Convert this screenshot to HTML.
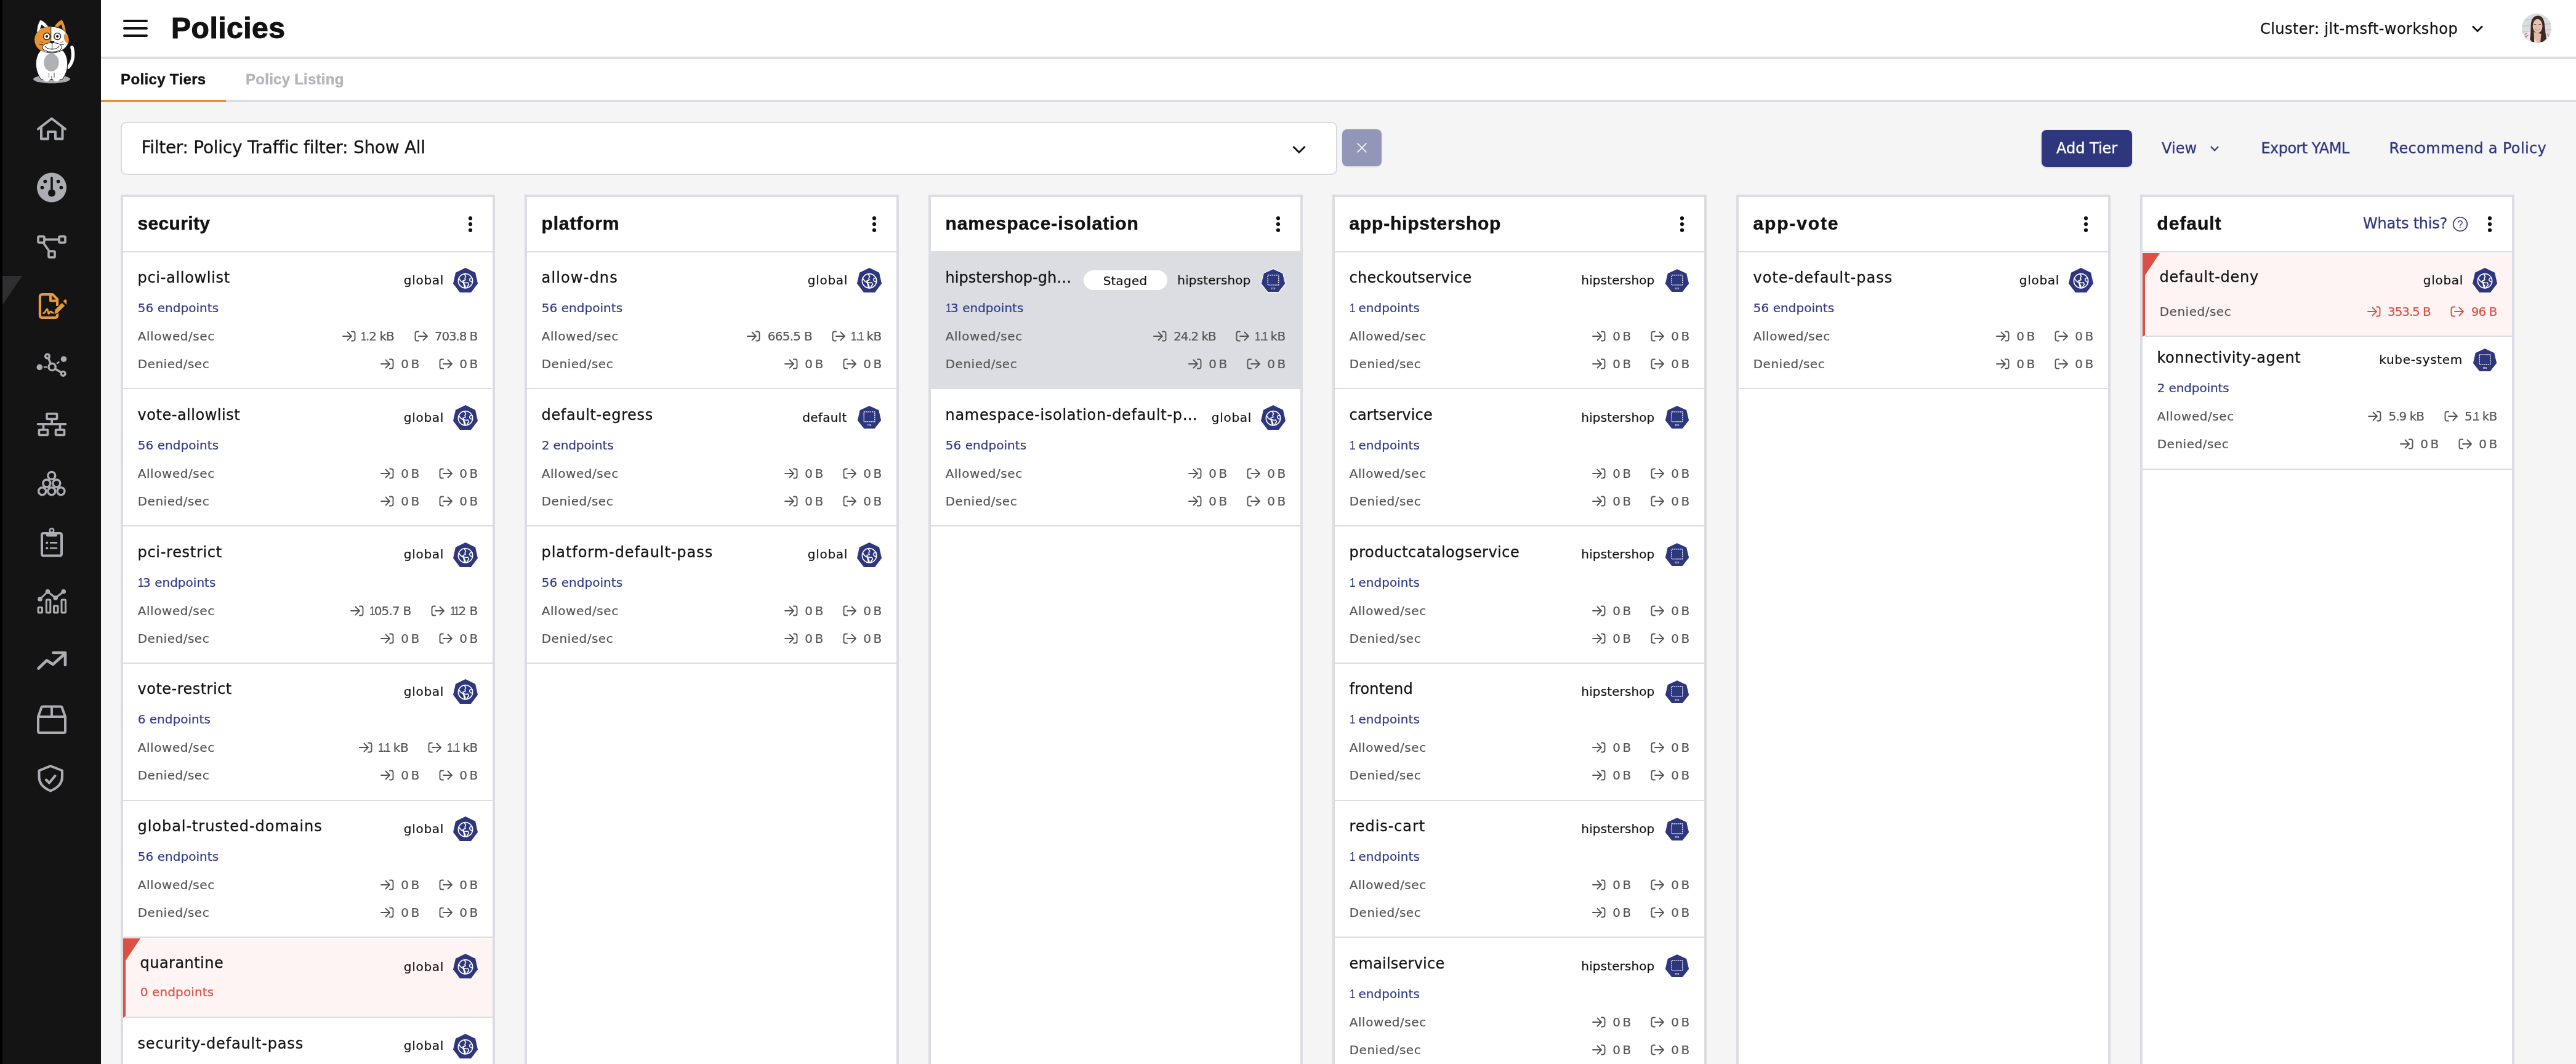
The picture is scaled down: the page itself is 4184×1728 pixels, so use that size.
<!DOCTYPE html><html lang="en"><head><meta charset="utf-8"><title>Policies</title>
<style>
html,body{margin:0;padding:0}
body{width:4184px;height:1728px;overflow:hidden;background:#f5f5f5;position:relative;font-family:"DejaVu Sans", "Liberation Sans", sans-serif}
.a{position:absolute}
.t{position:absolute;white-space:nowrap}
.r{font-family:"DejaVu Sans", "Liberation Sans", sans-serif;font-weight:400}
.b{font-family:"Liberation Sans", "DejaVu Sans", sans-serif;font-weight:700}
.col{position:absolute;top:316px;width:600px;height:1500px;border:4px solid #dcdde2;background:#fff}
.n1{font-family:"Liberation Sans",sans-serif;display:inline-block;transform:scaleX(.85);transform-origin:60% 50%;margin:0 -.08em 0 -.17em}
.sep{position:absolute;height:2px;background:#dcdde2}

</style></head><body><div id="root" style="position:absolute;left:0;top:0;width:4184px;height:1728px;will-change:transform">
<div class="a" style="left:0;top:0;width:164px;height:1728px;background:#141414"></div>
<div class="a" style="left:0;top:0;width:4px;height:1728px;background:#000"></div>
<svg class="a" style="left:4px;top:448px" width="32" height="47" viewBox="0 0 32 47"><polygon points="0,0 32,0 0,47" fill="#2f2f31"/></svg>
<svg class="a" style="left:40px;top:20px" width="100" height="130" viewBox="0 0 100 130">
<ellipse cx="44" cy="108.5" rx="30" ry="6.8" fill="#a9aab0"/>
<path d="M71 89C78 82 80.5 70 77 57" fill="none" stroke="#141414" stroke-width="8" stroke-linecap="round"/>
<path d="M71 89C78 82 80.5 70 77 57" fill="none" stroke="#fff" stroke-width="5.5" stroke-linecap="round"/>
<path d="M26 62C16 72 15 94 27 109H61C73 94 72 72 62 62Z" fill="#fff" stroke="#141414" stroke-width="1"/>
<circle cx="35.5" cy="106.5" r="6" fill="#fff"/><circle cx="51.5" cy="106.5" r="6" fill="#fff"/>
<path d="M39.5 98V106M48 98V106M44 103V110" stroke="#141414" stroke-width=".8" fill="none"/>
<ellipse cx="43.4" cy="81.5" rx="12.2" ry="14.5" fill="#b0b1b7"/>
<path d="M19.5 33C20 24 22 16 25.8 12.3C31 14 36 19 40 25Z" fill="#fff" stroke="#141414" stroke-width="1" stroke-linejoin="round"/>
<path d="M25 27L27.5 20L33.5 24.5Z" fill="#141414"/>
<path d="M47 24.5C51 18 56 13.5 60.5 11.8C64 16 66.5 24 67.5 33Z" fill="#e8932f" stroke="#141414" stroke-width="1" stroke-linejoin="round"/>
<path d="M54 24L59.5 19.5L62 28Z" fill="#141414"/>
<ellipse cx="44" cy="44.6" rx="27.9" ry="21.4" fill="#fff" stroke="#141414" stroke-width="1"/>
<path d="M42.8 23.3C30 22 16.2 31 16.2 44.6C16.2 54 22 62 32.5 64.5L30 55C33 51 38 49 42.8 48Z" fill="#e8932f"/>
<path d="M66 34C62 38 63 47 70.5 51C73 45 71.5 38 66 34Z" fill="#e8932f"/>
<path d="M42.8 23.3V47" stroke="#141414" stroke-width=".9"/>
<ellipse cx="44.6" cy="56.8" rx="15.9" ry="7.6" fill="#fff" stroke="#141414" stroke-width="1"/>
<path d="M33 55C37 61.5 52 61.5 56 55" fill="none" stroke="#141414" stroke-width="1.1"/>
<path d="M44.6 50V60" stroke="#141414" stroke-width="1"/>
<path d="M41 47H48.5L44.6 51.5Z" fill="#141414"/>
<circle cx="36" cy="39.1" r="5.4" fill="#fff" stroke="#141414" stroke-width="1.3"/><circle cx="36" cy="39.1" r="2.1" fill="#141414"/>
<circle cx="53.2" cy="39.1" r="5.4" fill="#fff" stroke="#141414" stroke-width="1.3"/><circle cx="53.2" cy="39.1" r="2.1" fill="#141414"/>
<path d="M24 52.5H30M58 52.5H64M26 47.5L30 49.5M58 49.5L63 47.5" stroke="#141414" stroke-width=".7"/>
</svg>

<svg class="a" style="left:0;top:0" width="164" height="1400" viewBox="0 0 164 1400" fill="none" stroke="#acadb3" stroke-width="4" stroke-linecap="round" stroke-linejoin="round">
<!-- home -->
<path d="M62 209.5L84 192.5L106 209.5M67 207V225.5H78V214H90V225.5H101.5V207"/>
<!-- gauge -->
<circle cx="84" cy="304.5" r="24" fill="#acadb3" stroke="none"/>
<g fill="#141414" stroke="none"><circle cx="84" cy="313.5" r="6"/><rect x="82.2" y="287" width="3.6" height="22" rx="1.8"/><circle cx="73.3" cy="294.6" r="2.9"/><circle cx="94.6" cy="294.6" r="2.9"/><circle cx="68.5" cy="304.6" r="2.9"/><circle cx="99.4" cy="304.6" r="2.9"/></g>
<!-- branch -->
<g stroke-width="3.6"><rect x="62" y="384" width="10" height="10" rx="1.5"/><rect x="96" y="384" width="10" height="10" rx="1.5"/><rect x="79" y="408" width="10" height="10" rx="1.5"/><path d="M72 389H96M70.5 394.5L80 408"/></g>
<!-- policy (active) -->
<g stroke="#e8993a"><path d="M93.1 497V486L85.2 478.1H68.9Q64.9 478.1 64.9 482.1V511.9Q64.9 515.9 68.9 515.9H89.1Q93.1 515.9 93.1 511.9V507" stroke-width="4.2" stroke-linecap="butt"/><path d="M82.1 480V488.5H92" stroke-width="4.2" stroke-linecap="butt"/><path d="M70.4 508.6C73.5 509 74.5 502 76.4 502C78.3 502 77.5 509.5 79 509.5C80.5 509.5 80.5 505.8 82 505.8C83.5 505.8 85 508.6 88 508.6" stroke-width="2.8"/><path d="M100.7 491L106.2 496.5L94.9 507.8L90.5 510.3H87.6L89.1 502.3Z" fill="#e8993a" stroke="#141414" stroke-width="1.4" stroke-linejoin="miter"/><path d="M102.6 489.3L105.7 486L108.2 487.2V495Z" fill="#e8993a" stroke="none"/></g>
<!-- nodes -->
<g stroke-width="3.4"><circle cx="84.6" cy="595.9" r="5.6"/><circle cx="77" cy="578.6" r="3.4"/><circle cx="102.6" cy="606.8" r="3.4"/><path d="M79 582.5L82.2 590.5M89.5 599L99.3 604.8"/><path d="M72 596.3H75.5M93 590L95.5 588" stroke-width="2.6"/><circle cx="64.3" cy="596.4" r="4.8" fill="#acadb3" stroke="none"/><circle cx="103.5" cy="583.2" r="4.8" fill="#acadb3" stroke="none"/></g>
<!-- sitemap -->
<g stroke-width="3.6"><rect x="76" y="672" width="16.5" height="8.5" rx="1"/><rect x="63.5" y="698" width="14" height="8.5" rx="1"/><rect x="90.5" y="698" width="14" height="8.5" rx="1"/><path d="M61.5 688.7H106.5M84.2 681V688M70.5 689.5V697M97.5 689.5V697"/></g>
<!-- balls -->
<g stroke-width="3.4"><circle cx="83.8" cy="772.4" r="6"/><circle cx="75.8" cy="785" r="6"/><circle cx="91.8" cy="785" r="6"/><circle cx="68.6" cy="797.8" r="6"/><circle cx="83.8" cy="797.8" r="6"/><circle cx="99" cy="797.8" r="6"/></g>
<!-- clipboard -->
<g><rect x="68" y="866" width="32" height="36.5" rx="2.5" stroke-width="4"/><path d="M77 866V869.5H91V866" stroke-width="4"/><circle cx="84" cy="861.5" r="3.2" stroke-width="2.6"/><path d="M82 881.4H92M82 890.2H92" stroke-width="2.6"/><circle cx="76.2" cy="881.4" r="2" fill="#acadb3" stroke="none"/><circle cx="76.2" cy="890.2" r="2" fill="#acadb3" stroke="none"/></g>
<!-- chart -->
<g stroke-width="3"><rect x="62" y="986.5" width="6.5" height="8.5" rx="1"/><rect x="75.3" y="974" width="6.5" height="21" rx="1"/><rect x="87.5" y="984" width="6.5" height="11" rx="1"/><rect x="100" y="974" width="6.5" height="21" rx="1"/><path d="M65 973L77.5 960.8L90.2 971L103.2 960.8"/><g fill="#acadb3" stroke="none"><circle cx="65" cy="973" r="3.8"/><circle cx="77.5" cy="960.8" r="3.8"/><circle cx="90.2" cy="971" r="3.8"/><circle cx="103.2" cy="960.8" r="3.8"/></g></g>
<!-- trend -->
<path d="M62.5 1085.5L76 1072.5L86 1079L105 1062M86.5 1060H106V1080" stroke-width="4.6"/>
<!-- box -->
<path d="M62 1164V1187.5Q62 1190 64.5 1190H103.5Q106 1190 106 1187.5V1164L100.5 1148.5Q100 1147.5 98.5 1147.5H69.5Q68 1147.5 67.5 1148.5ZM62 1164H106M84 1147.5V1164" stroke-width="4"/>
<!-- shield -->
<g><path d="M82 1244L63.5 1251.5V1262C63.5 1272 70 1279.5 82 1284.5C94 1279.5 101 1272 101 1262V1251.5Z" stroke-width="4"/><path d="M75 1266.5L80 1271.5L89.5 1260" stroke-width="4"/></g>
</svg>

<div class="a" style="left:164px;top:0;width:4020px;height:92px;background:#fff"></div>
<div class="a" style="left:164px;top:92px;width:4020px;height:4px;background:#dcdde2"></div>
<div class="a" style="left:164px;top:96px;width:4020px;height:66px;background:#fff"></div>
<div class="a" style="left:164px;top:162px;width:4020px;height:4px;background:#dcdde2"></div>
<div class="a" style="left:164px;top:162px;width:203px;height:4px;background:#e8932f"></div>
<svg class="a" style="left:198px;top:30px" width="44" height="32" viewBox="0 0 44 32" stroke="#121212" stroke-width="4" stroke-linecap="round"><path d="M4 4H40M4 16H40M4 28H40"/></svg>
<div class="t b" style="top:11.87px;font-size:48px;line-height:67px;color:#121212;letter-spacing:0.481px;left:278.08px;-webkit-text-stroke:1.1px #121212;">Policies</div>
<div class="t b" style="top:111.68px;font-size:24px;line-height:34px;color:#121212;letter-spacing:0.35px;left:196.04px;-webkit-text-stroke:0.4px #121212;">Policy Tiers</div>
<div class="t b" style="top:111.68px;font-size:24px;line-height:34px;color:#b3b4bc;letter-spacing:0.255px;left:399.04px;-webkit-text-stroke:0.4px #b3b4bc;">Policy Listing</div>
<div class="t r" style="top:29.70px;font-size:24px;line-height:34px;color:#121212;letter-spacing:0.443px;left:3671.04px;-webkit-text-stroke:0.3px #121212;">Cluster: jlt-msft-workshop</div>
<svg class="a" style="left:4013px;top:39px" width="22" height="15" viewBox="0 0 22 15" fill="none" stroke="#121212" stroke-width="2.8"><path d="M3 3.5L11 11.5L19 3.5"/></svg>
<svg class="a" style="left:4096px;top:22px" width="48" height="48" viewBox="0 0 48 48">
<defs><clipPath id="avc"><circle cx="24" cy="24" r="24"/></clipPath></defs>
<g clip-path="url(#avc)">
<rect width="48" height="48" fill="#d9dddd"/>
<path d="M0 11L48 7M0 20.5L48 16.5M0 30L48 26M0 39L48 35" stroke="#c3c8c9" stroke-width="1.3"/>
<path d="M0 48V36C4 31 9 29 15 29H36C41 30 45 33 48 37V48Z" fill="#eeeaee"/>
<path d="M5 34L8 32M7 38L10 35M4.5 41L7 39.5M41 33L44 35" stroke="#cf7f8c" stroke-width="1.6" stroke-linecap="round"/>
<path d="M5 37L7 36M42 36L44 37.5" stroke="#7f93b8" stroke-width="1.4" stroke-linecap="round"/>
<path d="M26.3 3.4C19 3.4 15.4 9 14.8 18C14.2 27 14.6 35 13 42L16.5 46L34 46.5L40 41C38.5 33 38 26 37 17.5C36 9 33 3.4 26.3 3.4Z" fill="#3c2a25"/>
<path d="M19.5 30L20.5 48H30L31.5 33Z" fill="#e3bca9"/>
<path d="M20 40L25 48L21 48Z" fill="#f1edf0"/>
<ellipse cx="25.6" cy="20.3" rx="7.9" ry="11.2" fill="#e8c3b1"/>
<path d="M17.6 17C18 11 22 7.6 26.8 7.6C31 7.6 33.2 11 33.8 17.5C36.5 12 33.5 4.8 26.3 4.8C19.5 4.8 16 11 17.6 17Z" fill="#3c2a25"/>
<path d="M20.8 24.8C22.8 28.3 27.8 28.3 29.8 24.8C27 26 23.6 26 20.8 24.8Z" fill="#fbf4f2" stroke="#b97a7e" stroke-width=".7"/>
<path d="M19.8 17.6H23M27.6 17.6H30.8" stroke="#6a524a" stroke-width="1.1" stroke-linecap="round"/>
<path d="M24.6 19V22.2H26" stroke="#d3a894" stroke-width=".7" fill="none"/>
</g></svg>

<div class="a" style="left:196px;top:198px;width:1972px;height:82px;border:2px solid #d9dade;border-radius:9px;background:#fff"></div>
<div class="t r" style="top:219.81px;font-size:28px;line-height:39px;color:#121212;letter-spacing:-0.275px;left:229.38px;-webkit-text-stroke:0.3px #121212;">Filter: Policy Traffic filter: Show All</div>
<svg class="a" style="left:2097px;top:234px" width="26" height="18" viewBox="0 0 26 18" fill="none" stroke="#121212" stroke-width="3"><path d="M3.5 4L13 13.5L22.5 4"/></svg>
<div class="a" style="left:2180px;top:210px;width:64px;height:60px;border-radius:8px;background:#9297ba;box-shadow:0 1px 3px rgba(0,0,0,.12)"></div>
<svg class="a" style="left:2202px;top:230px" width="20" height="20" viewBox="0 0 20 20" stroke="#fff" stroke-width="1.6"><path d="M2.5 2.5L17.5 17.5M17.5 2.5L2.5 17.5"/></svg>
<div class="a" style="left:3316px;top:211px;width:147px;height:60px;border-radius:8px;background:#2e377d;box-shadow:0 1px 3px rgba(0,0,0,.2)"></div>
<div class="t r" style="top:223.70px;font-size:24px;line-height:34px;color:#fff;letter-spacing:-0.025px;left:3340.04px;-webkit-text-stroke:0.35px #fff;">Add Tier</div>
<div class="t r" style="top:223.70px;font-size:24px;line-height:34px;color:#2e377d;letter-spacing:0.066px;left:3511.04px;-webkit-text-stroke:0.35px #2e377d;">View</div>
<svg class="a" style="left:3588px;top:235px" width="18" height="13" viewBox="0 0 18 13" fill="none" stroke="#2e377d" stroke-width="2.2"><path d="M3 3L9 9.5L15 3"/></svg>
<div class="t r" style="top:223.70px;font-size:24px;line-height:34px;color:#2e377d;letter-spacing:-0.583px;left:3672.54px;-webkit-text-stroke:0.35px #2e377d;">Export YAML</div>
<div class="t r" style="top:223.70px;font-size:24px;line-height:34px;color:#2e377d;letter-spacing:0.349px;left:3880.54px;-webkit-text-stroke:0.35px #2e377d;">Recommend a Policy</div>
<div class="col" style="left:196px"></div>
<div class="t b" style="top:341.61px;font-size:30px;line-height:42px;color:#121212;letter-spacing:0.337px;left:223.50px;-webkit-text-stroke:0.5px #121212;">security</div>
<svg class="a" style="left:759px;top:349px" width="10" height="30" viewBox="0 0 10 30" fill="#121212"><circle cx="5" cy="5.4" r="3.1"/><circle cx="5" cy="15.1" r="3.1"/><circle cx="5" cy="24.8" r="3.1"/></svg>
<div class="sep" style="left:200px;top:408px;width:600px"></div>
<div class="t r nm" style="top:433.70px;font-size:24px;line-height:34px;color:#121212;letter-spacing:0.69px;left:223.54px;-webkit-text-stroke:0.3px #121212;">pci-allowlist</div>
<svg class="a" style="left:736px;top:435px;overflow:visible" width="40" height="40" viewBox="0 0 40 40"><polygon points="20,0 36,7.7 40,25.5 29,40 11,40 0,25.5 4,7.7" fill="#2e377d"/><circle cx="20" cy="21.2" r="11.6" fill="none" stroke="#fff" stroke-width="1.7"/><path d="M18.5 10.5 L20.5 14 L19 17 L20 19.5 L16 21 L17 23.5 L21 24.5 L24 24 L25.5 27 L23.5 29.5 L22 32.5 M17 23.5 L18 26 L19.5 29 L20 32.5 M9.5 17.5 L12.5 21.5 L16.5 24 L17.5 27.5 L18.5 31.5 M31.3 17 C28 15.5 26 18 27 20.5 C28 22.5 30 22.8 31.5 22.5" fill="none" stroke="#fff" stroke-width="1.6" stroke-linejoin="round" stroke-linecap="round"/></svg>
<div class="t r ns" style="top:441.08px;font-size:20px;line-height:28px;color:#121212;letter-spacing:0.692px;right:3463.01px;-webkit-text-stroke:0.22px #121212;">global</div>
<div class="t r ep" style="top:486.08px;font-size:20px;line-height:28px;color:#303b88;letter-spacing:0.049px;left:223.70px;-webkit-text-stroke:0.22px #303b88;">56 endpoints</div>
<div class="t r lb" style="top:532.08px;font-size:20px;line-height:28px;color:#555555;letter-spacing:0.56px;left:223.70px;-webkit-text-stroke:0.22px #555555;">Allowed/sec</div>
<div class="t r" style="top:532.08px;font-size:20px;line-height:28px;color:#555555;letter-spacing:-1.147px;right:3408.85px;-webkit-text-stroke:0.22px #555555;">703.8 B</div>
<svg class="a" style="left:672.5px;top:537px" width="22" height="18" viewBox="0 0 22 18" fill="none" stroke="#555555" stroke-width="1.9" stroke-linecap="round" stroke-linejoin="round"><path d="M7 9H20.5M14.5 2.5L21 9L14.5 15.5M7 1.5H4.5Q1.5 1.5 1.5 4.5V13.5Q1.5 16.5 4.5 16.5H7"/></svg>
<div class="t r" style="top:532.08px;font-size:20px;line-height:28px;color:#555555;letter-spacing:-0.986px;right:3544.19px;-webkit-text-stroke:0.22px #555555;"><span class="n1">1</span>.2 kB</div>
<svg class="a" style="left:555.5px;top:537px" width="22" height="18" viewBox="0 0 22 18" fill="none" stroke="#555555" stroke-width="1.9" stroke-linecap="round" stroke-linejoin="round"><path d="M1 9H14.5M8.5 2.5L15 9L8.5 15.5M15 1.5H17.5Q20.5 1.5 20.5 4.5V13.5Q20.5 16.5 17.5 16.5H15"/></svg>
<div class="t r lb" style="top:577.08px;font-size:20px;line-height:28px;color:#555555;letter-spacing:0.506px;left:223.70px;-webkit-text-stroke:0.22px #555555;">Denied/sec</div>
<div class="t r" style="top:577.08px;font-size:20px;line-height:28px;color:#555555;letter-spacing:-1.426px;right:3409.13px;-webkit-text-stroke:0.22px #555555;">0 B</div>
<svg class="a" style="left:713.0px;top:582px" width="22" height="18" viewBox="0 0 22 18" fill="none" stroke="#555555" stroke-width="1.9" stroke-linecap="round" stroke-linejoin="round"><path d="M7 9H20.5M14.5 2.5L21 9L14.5 15.5M7 1.5H4.5Q1.5 1.5 1.5 4.5V13.5Q1.5 16.5 4.5 16.5H7"/></svg>
<div class="t r" style="top:577.08px;font-size:20px;line-height:28px;color:#555555;letter-spacing:-1.426px;right:3504.13px;-webkit-text-stroke:0.22px #555555;">0 B</div>
<svg class="a" style="left:618.0px;top:582px" width="22" height="18" viewBox="0 0 22 18" fill="none" stroke="#555555" stroke-width="1.9" stroke-linecap="round" stroke-linejoin="round"><path d="M1 9H14.5M8.5 2.5L15 9L8.5 15.5M15 1.5H17.5Q20.5 1.5 20.5 4.5V13.5Q20.5 16.5 17.5 16.5H15"/></svg>
<div class="sep" style="left:200px;top:630px;width:600px"></div>
<div class="t r nm" style="top:656.70px;font-size:24px;line-height:34px;color:#121212;letter-spacing:0.525px;left:223.54px;-webkit-text-stroke:0.3px #121212;">vote-allowlist</div>
<svg class="a" style="left:736px;top:657.75px;overflow:visible" width="40" height="40" viewBox="0 0 40 40"><polygon points="20,0 36,7.7 40,25.5 29,40 11,40 0,25.5 4,7.7" fill="#2e377d"/><circle cx="20" cy="21.2" r="11.6" fill="none" stroke="#fff" stroke-width="1.7"/><path d="M18.5 10.5 L20.5 14 L19 17 L20 19.5 L16 21 L17 23.5 L21 24.5 L24 24 L25.5 27 L23.5 29.5 L22 32.5 M17 23.5 L18 26 L19.5 29 L20 32.5 M9.5 17.5 L12.5 21.5 L16.5 24 L17.5 27.5 L18.5 31.5 M31.3 17 C28 15.5 26 18 27 20.5 C28 22.5 30 22.8 31.5 22.5" fill="none" stroke="#fff" stroke-width="1.6" stroke-linejoin="round" stroke-linecap="round"/></svg>
<div class="t r ns" style="top:664.08px;font-size:20px;line-height:28px;color:#121212;letter-spacing:0.692px;right:3463.01px;-webkit-text-stroke:0.22px #121212;">global</div>
<div class="t r ep" style="top:709.08px;font-size:20px;line-height:28px;color:#303b88;letter-spacing:0.049px;left:223.70px;-webkit-text-stroke:0.22px #303b88;">56 endpoints</div>
<div class="t r lb" style="top:755.08px;font-size:20px;line-height:28px;color:#555555;letter-spacing:0.56px;left:223.70px;-webkit-text-stroke:0.22px #555555;">Allowed/sec</div>
<div class="t r" style="top:755.08px;font-size:20px;line-height:28px;color:#555555;letter-spacing:-1.426px;right:3409.13px;-webkit-text-stroke:0.22px #555555;">0 B</div>
<svg class="a" style="left:713.0px;top:759.75px" width="22" height="18" viewBox="0 0 22 18" fill="none" stroke="#555555" stroke-width="1.9" stroke-linecap="round" stroke-linejoin="round"><path d="M7 9H20.5M14.5 2.5L21 9L14.5 15.5M7 1.5H4.5Q1.5 1.5 1.5 4.5V13.5Q1.5 16.5 4.5 16.5H7"/></svg>
<div class="t r" style="top:755.08px;font-size:20px;line-height:28px;color:#555555;letter-spacing:-1.426px;right:3504.13px;-webkit-text-stroke:0.22px #555555;">0 B</div>
<svg class="a" style="left:618.0px;top:759.75px" width="22" height="18" viewBox="0 0 22 18" fill="none" stroke="#555555" stroke-width="1.9" stroke-linecap="round" stroke-linejoin="round"><path d="M1 9H14.5M8.5 2.5L15 9L8.5 15.5M15 1.5H17.5Q20.5 1.5 20.5 4.5V13.5Q20.5 16.5 17.5 16.5H15"/></svg>
<div class="t r lb" style="top:800.08px;font-size:20px;line-height:28px;color:#555555;letter-spacing:0.506px;left:223.70px;-webkit-text-stroke:0.22px #555555;">Denied/sec</div>
<div class="t r" style="top:800.08px;font-size:20px;line-height:28px;color:#555555;letter-spacing:-1.426px;right:3409.13px;-webkit-text-stroke:0.22px #555555;">0 B</div>
<svg class="a" style="left:713.0px;top:804.75px" width="22" height="18" viewBox="0 0 22 18" fill="none" stroke="#555555" stroke-width="1.9" stroke-linecap="round" stroke-linejoin="round"><path d="M7 9H20.5M14.5 2.5L21 9L14.5 15.5M7 1.5H4.5Q1.5 1.5 1.5 4.5V13.5Q1.5 16.5 4.5 16.5H7"/></svg>
<div class="t r" style="top:800.08px;font-size:20px;line-height:28px;color:#555555;letter-spacing:-1.426px;right:3504.13px;-webkit-text-stroke:0.22px #555555;">0 B</div>
<svg class="a" style="left:618.0px;top:804.75px" width="22" height="18" viewBox="0 0 22 18" fill="none" stroke="#555555" stroke-width="1.9" stroke-linecap="round" stroke-linejoin="round"><path d="M1 9H14.5M8.5 2.5L15 9L8.5 15.5M15 1.5H17.5Q20.5 1.5 20.5 4.5V13.5Q20.5 16.5 17.5 16.5H15"/></svg>
<div class="sep" style="left:200px;top:853px;width:600px"></div>
<div class="t r nm" style="top:879.70px;font-size:24px;line-height:34px;color:#121212;letter-spacing:0.703px;left:223.54px;-webkit-text-stroke:0.3px #121212;">pci-restrict</div>
<svg class="a" style="left:736px;top:880.5px;overflow:visible" width="40" height="40" viewBox="0 0 40 40"><polygon points="20,0 36,7.7 40,25.5 29,40 11,40 0,25.5 4,7.7" fill="#2e377d"/><circle cx="20" cy="21.2" r="11.6" fill="none" stroke="#fff" stroke-width="1.7"/><path d="M18.5 10.5 L20.5 14 L19 17 L20 19.5 L16 21 L17 23.5 L21 24.5 L24 24 L25.5 27 L23.5 29.5 L22 32.5 M17 23.5 L18 26 L19.5 29 L20 32.5 M9.5 17.5 L12.5 21.5 L16.5 24 L17.5 27.5 L18.5 31.5 M31.3 17 C28 15.5 26 18 27 20.5 C28 22.5 30 22.8 31.5 22.5" fill="none" stroke="#fff" stroke-width="1.6" stroke-linejoin="round" stroke-linecap="round"/></svg>
<div class="t r ns" style="top:886.08px;font-size:20px;line-height:28px;color:#121212;letter-spacing:0.692px;right:3463.01px;-webkit-text-stroke:0.22px #121212;">global</div>
<div class="t r ep" style="top:932.08px;font-size:20px;line-height:28px;color:#303b88;letter-spacing:0.012px;left:225.90px;-webkit-text-stroke:0.22px #303b88;"><span class="n1">1</span>3 endpoints</div>
<div class="t r lb" style="top:978.08px;font-size:20px;line-height:28px;color:#555555;letter-spacing:0.56px;left:223.70px;-webkit-text-stroke:0.22px #555555;">Allowed/sec</div>
<div class="t r" style="top:978.08px;font-size:20px;line-height:28px;color:#555555;letter-spacing:-0.533px;right:3408.23px;-webkit-text-stroke:0.22px #555555;"><span class="n1">1</span><span class="n1">1</span>2 B</div>
<svg class="a" style="left:700.0px;top:982.5px" width="22" height="18" viewBox="0 0 22 18" fill="none" stroke="#555555" stroke-width="1.9" stroke-linecap="round" stroke-linejoin="round"><path d="M7 9H20.5M14.5 2.5L21 9L14.5 15.5M7 1.5H4.5Q1.5 1.5 1.5 4.5V13.5Q1.5 16.5 4.5 16.5H7"/></svg>
<div class="t r" style="top:978.08px;font-size:20px;line-height:28px;color:#555555;letter-spacing:-0.798px;right:3516.50px;-webkit-text-stroke:0.22px #555555;"><span class="n1">1</span>05.7 B</div>
<svg class="a" style="left:569.0px;top:982.5px" width="22" height="18" viewBox="0 0 22 18" fill="none" stroke="#555555" stroke-width="1.9" stroke-linecap="round" stroke-linejoin="round"><path d="M1 9H14.5M8.5 2.5L15 9L8.5 15.5M15 1.5H17.5Q20.5 1.5 20.5 4.5V13.5Q20.5 16.5 17.5 16.5H15"/></svg>
<div class="t r lb" style="top:1023.08px;font-size:20px;line-height:28px;color:#555555;letter-spacing:0.506px;left:223.70px;-webkit-text-stroke:0.22px #555555;">Denied/sec</div>
<div class="t r" style="top:1023.08px;font-size:20px;line-height:28px;color:#555555;letter-spacing:-1.426px;right:3409.13px;-webkit-text-stroke:0.22px #555555;">0 B</div>
<svg class="a" style="left:713.0px;top:1027.5px" width="22" height="18" viewBox="0 0 22 18" fill="none" stroke="#555555" stroke-width="1.9" stroke-linecap="round" stroke-linejoin="round"><path d="M7 9H20.5M14.5 2.5L21 9L14.5 15.5M7 1.5H4.5Q1.5 1.5 1.5 4.5V13.5Q1.5 16.5 4.5 16.5H7"/></svg>
<div class="t r" style="top:1023.08px;font-size:20px;line-height:28px;color:#555555;letter-spacing:-1.426px;right:3504.13px;-webkit-text-stroke:0.22px #555555;">0 B</div>
<svg class="a" style="left:618.0px;top:1027.5px" width="22" height="18" viewBox="0 0 22 18" fill="none" stroke="#555555" stroke-width="1.9" stroke-linecap="round" stroke-linejoin="round"><path d="M1 9H14.5M8.5 2.5L15 9L8.5 15.5M15 1.5H17.5Q20.5 1.5 20.5 4.5V13.5Q20.5 16.5 17.5 16.5H15"/></svg>
<div class="sep" style="left:200px;top:1076px;width:600px"></div>
<div class="t r nm" style="top:1101.70px;font-size:24px;line-height:34px;color:#121212;letter-spacing:0.48px;left:223.54px;-webkit-text-stroke:0.3px #121212;">vote-restrict</div>
<svg class="a" style="left:736px;top:1103.25px;overflow:visible" width="40" height="40" viewBox="0 0 40 40"><polygon points="20,0 36,7.7 40,25.5 29,40 11,40 0,25.5 4,7.7" fill="#2e377d"/><circle cx="20" cy="21.2" r="11.6" fill="none" stroke="#fff" stroke-width="1.7"/><path d="M18.5 10.5 L20.5 14 L19 17 L20 19.5 L16 21 L17 23.5 L21 24.5 L24 24 L25.5 27 L23.5 29.5 L22 32.5 M17 23.5 L18 26 L19.5 29 L20 32.5 M9.5 17.5 L12.5 21.5 L16.5 24 L17.5 27.5 L18.5 31.5 M31.3 17 C28 15.5 26 18 27 20.5 C28 22.5 30 22.8 31.5 22.5" fill="none" stroke="#fff" stroke-width="1.6" stroke-linejoin="round" stroke-linecap="round"/></svg>
<div class="t r ns" style="top:1109.08px;font-size:20px;line-height:28px;color:#121212;letter-spacing:0.692px;right:3463.01px;-webkit-text-stroke:0.22px #121212;">global</div>
<div class="t r ep" style="top:1154.08px;font-size:20px;line-height:28px;color:#303b88;left:223.70px;-webkit-text-stroke:0.22px #303b88;">6 endpoints</div>
<div class="t r lb" style="top:1200.08px;font-size:20px;line-height:28px;color:#555555;letter-spacing:0.56px;left:223.70px;-webkit-text-stroke:0.22px #555555;">Allowed/sec</div>
<div class="t r" style="top:1200.08px;font-size:20px;line-height:28px;color:#555555;letter-spacing:-0.53px;right:3408.23px;-webkit-text-stroke:0.22px #555555;"><span class="n1">1</span>.<span class="n1">1</span> kB</div>
<svg class="a" style="left:695.3px;top:1205.25px" width="22" height="18" viewBox="0 0 22 18" fill="none" stroke="#555555" stroke-width="1.9" stroke-linecap="round" stroke-linejoin="round"><path d="M7 9H20.5M14.5 2.5L21 9L14.5 15.5M7 1.5H4.5Q1.5 1.5 1.5 4.5V13.5Q1.5 16.5 4.5 16.5H7"/></svg>
<div class="t r" style="top:1200.08px;font-size:20px;line-height:28px;color:#555555;letter-spacing:-0.53px;right:3520.93px;-webkit-text-stroke:0.22px #555555;"><span class="n1">1</span>.<span class="n1">1</span> kB</div>
<svg class="a" style="left:582.6px;top:1205.25px" width="22" height="18" viewBox="0 0 22 18" fill="none" stroke="#555555" stroke-width="1.9" stroke-linecap="round" stroke-linejoin="round"><path d="M1 9H14.5M8.5 2.5L15 9L8.5 15.5M15 1.5H17.5Q20.5 1.5 20.5 4.5V13.5Q20.5 16.5 17.5 16.5H15"/></svg>
<div class="t r lb" style="top:1245.08px;font-size:20px;line-height:28px;color:#555555;letter-spacing:0.506px;left:223.70px;-webkit-text-stroke:0.22px #555555;">Denied/sec</div>
<div class="t r" style="top:1245.08px;font-size:20px;line-height:28px;color:#555555;letter-spacing:-1.426px;right:3409.13px;-webkit-text-stroke:0.22px #555555;">0 B</div>
<svg class="a" style="left:713.0px;top:1250.25px" width="22" height="18" viewBox="0 0 22 18" fill="none" stroke="#555555" stroke-width="1.9" stroke-linecap="round" stroke-linejoin="round"><path d="M7 9H20.5M14.5 2.5L21 9L14.5 15.5M7 1.5H4.5Q1.5 1.5 1.5 4.5V13.5Q1.5 16.5 4.5 16.5H7"/></svg>
<div class="t r" style="top:1245.08px;font-size:20px;line-height:28px;color:#555555;letter-spacing:-1.426px;right:3504.13px;-webkit-text-stroke:0.22px #555555;">0 B</div>
<svg class="a" style="left:618.0px;top:1250.25px" width="22" height="18" viewBox="0 0 22 18" fill="none" stroke="#555555" stroke-width="1.9" stroke-linecap="round" stroke-linejoin="round"><path d="M1 9H14.5M8.5 2.5L15 9L8.5 15.5M15 1.5H17.5Q20.5 1.5 20.5 4.5V13.5Q20.5 16.5 17.5 16.5H15"/></svg>
<div class="sep" style="left:200px;top:1299px;width:600px"></div>
<div class="t r nm" style="top:1324.70px;font-size:24px;line-height:34px;color:#121212;letter-spacing:0.945px;left:223.54px;-webkit-text-stroke:0.3px #121212;">global-trusted-domains</div>
<svg class="a" style="left:736px;top:1326.0px;overflow:visible" width="40" height="40" viewBox="0 0 40 40"><polygon points="20,0 36,7.7 40,25.5 29,40 11,40 0,25.5 4,7.7" fill="#2e377d"/><circle cx="20" cy="21.2" r="11.6" fill="none" stroke="#fff" stroke-width="1.7"/><path d="M18.5 10.5 L20.5 14 L19 17 L20 19.5 L16 21 L17 23.5 L21 24.5 L24 24 L25.5 27 L23.5 29.5 L22 32.5 M17 23.5 L18 26 L19.5 29 L20 32.5 M9.5 17.5 L12.5 21.5 L16.5 24 L17.5 27.5 L18.5 31.5 M31.3 17 C28 15.5 26 18 27 20.5 C28 22.5 30 22.8 31.5 22.5" fill="none" stroke="#fff" stroke-width="1.6" stroke-linejoin="round" stroke-linecap="round"/></svg>
<div class="t r ns" style="top:1332.08px;font-size:20px;line-height:28px;color:#121212;letter-spacing:0.692px;right:3463.01px;-webkit-text-stroke:0.22px #121212;">global</div>
<div class="t r ep" style="top:1377.08px;font-size:20px;line-height:28px;color:#303b88;letter-spacing:0.049px;left:223.70px;-webkit-text-stroke:0.22px #303b88;">56 endpoints</div>
<div class="t r lb" style="top:1423.08px;font-size:20px;line-height:28px;color:#555555;letter-spacing:0.56px;left:223.70px;-webkit-text-stroke:0.22px #555555;">Allowed/sec</div>
<div class="t r" style="top:1423.08px;font-size:20px;line-height:28px;color:#555555;letter-spacing:-1.426px;right:3409.13px;-webkit-text-stroke:0.22px #555555;">0 B</div>
<svg class="a" style="left:713.0px;top:1428.0px" width="22" height="18" viewBox="0 0 22 18" fill="none" stroke="#555555" stroke-width="1.9" stroke-linecap="round" stroke-linejoin="round"><path d="M7 9H20.5M14.5 2.5L21 9L14.5 15.5M7 1.5H4.5Q1.5 1.5 1.5 4.5V13.5Q1.5 16.5 4.5 16.5H7"/></svg>
<div class="t r" style="top:1423.08px;font-size:20px;line-height:28px;color:#555555;letter-spacing:-1.426px;right:3504.13px;-webkit-text-stroke:0.22px #555555;">0 B</div>
<svg class="a" style="left:618.0px;top:1428.0px" width="22" height="18" viewBox="0 0 22 18" fill="none" stroke="#555555" stroke-width="1.9" stroke-linecap="round" stroke-linejoin="round"><path d="M1 9H14.5M8.5 2.5L15 9L8.5 15.5M15 1.5H17.5Q20.5 1.5 20.5 4.5V13.5Q20.5 16.5 17.5 16.5H15"/></svg>
<div class="t r lb" style="top:1468.08px;font-size:20px;line-height:28px;color:#555555;letter-spacing:0.506px;left:223.70px;-webkit-text-stroke:0.22px #555555;">Denied/sec</div>
<div class="t r" style="top:1468.08px;font-size:20px;line-height:28px;color:#555555;letter-spacing:-1.426px;right:3409.13px;-webkit-text-stroke:0.22px #555555;">0 B</div>
<svg class="a" style="left:713.0px;top:1473.0px" width="22" height="18" viewBox="0 0 22 18" fill="none" stroke="#555555" stroke-width="1.9" stroke-linecap="round" stroke-linejoin="round"><path d="M7 9H20.5M14.5 2.5L21 9L14.5 15.5M7 1.5H4.5Q1.5 1.5 1.5 4.5V13.5Q1.5 16.5 4.5 16.5H7"/></svg>
<div class="t r" style="top:1468.08px;font-size:20px;line-height:28px;color:#555555;letter-spacing:-1.426px;right:3504.13px;-webkit-text-stroke:0.22px #555555;">0 B</div>
<svg class="a" style="left:618.0px;top:1473.0px" width="22" height="18" viewBox="0 0 22 18" fill="none" stroke="#555555" stroke-width="1.9" stroke-linecap="round" stroke-linejoin="round"><path d="M1 9H14.5M8.5 2.5L15 9L8.5 15.5M15 1.5H17.5Q20.5 1.5 20.5 4.5V13.5Q20.5 16.5 17.5 16.5H15"/></svg>
<div class="sep" style="left:200px;top:1521px;width:600px"></div>
<div class="a" style="left:205px;top:1524px;width:595px;height:127px;background:#fef4f3"></div>
<svg class="a" style="left:200px;top:1524px" width="28" height="129" viewBox="0 0 28 129"><polygon points="0,0 28,0 4,36 4,126.6 0,129" fill="#dd4f43"/></svg>
<div class="t r nm" style="top:1546.70px;font-size:24px;line-height:34px;color:#121212;letter-spacing:0.461px;left:227.54px;-webkit-text-stroke:0.3px #121212;">quarantine</div>
<div class="t r ep" style="top:1597.08px;font-size:20px;line-height:28px;color:#dd4f43;letter-spacing:0.127px;left:227.70px;-webkit-text-stroke:0.22px #dd4f43;">0 endpoints</div>
<svg class="a" style="left:736px;top:1549.0px;overflow:visible" width="40" height="40" viewBox="0 0 40 40"><polygon points="20,0 36,7.7 40,25.5 29,40 11,40 0,25.5 4,7.7" fill="#2e377d"/><circle cx="20" cy="21.2" r="11.6" fill="none" stroke="#fff" stroke-width="1.7"/><path d="M18.5 10.5 L20.5 14 L19 17 L20 19.5 L16 21 L17 23.5 L21 24.5 L24 24 L25.5 27 L23.5 29.5 L22 32.5 M17 23.5 L18 26 L19.5 29 L20 32.5 M9.5 17.5 L12.5 21.5 L16.5 24 L17.5 27.5 L18.5 31.5 M31.3 17 C28 15.5 26 18 27 20.5 C28 22.5 30 22.8 31.5 22.5" fill="none" stroke="#fff" stroke-width="1.6" stroke-linejoin="round" stroke-linecap="round"/></svg>
<div class="t r ns" style="top:1556.08px;font-size:20px;line-height:28px;color:#121212;letter-spacing:0.692px;right:3463.01px;-webkit-text-stroke:0.22px #121212;">global</div>
<div class="sep" style="left:204px;top:1651px;width:596px"></div>
<div class="t r nm" style="top:1677.70px;font-size:24px;line-height:34px;color:#121212;letter-spacing:0.826px;left:223.54px;-webkit-text-stroke:0.3px #121212;">security-default-pass</div>
<svg class="a" style="left:736px;top:1678.5px;overflow:visible" width="40" height="40" viewBox="0 0 40 40"><polygon points="20,0 36,7.7 40,25.5 29,40 11,40 0,25.5 4,7.7" fill="#2e377d"/><circle cx="20" cy="21.2" r="11.6" fill="none" stroke="#fff" stroke-width="1.7"/><path d="M18.5 10.5 L20.5 14 L19 17 L20 19.5 L16 21 L17 23.5 L21 24.5 L24 24 L25.5 27 L23.5 29.5 L22 32.5 M17 23.5 L18 26 L19.5 29 L20 32.5 M9.5 17.5 L12.5 21.5 L16.5 24 L17.5 27.5 L18.5 31.5 M31.3 17 C28 15.5 26 18 27 20.5 C28 22.5 30 22.8 31.5 22.5" fill="none" stroke="#fff" stroke-width="1.6" stroke-linejoin="round" stroke-linecap="round"/></svg>
<div class="t r ns" style="top:1684.08px;font-size:20px;line-height:28px;color:#121212;letter-spacing:0.692px;right:3463.01px;-webkit-text-stroke:0.22px #121212;">global</div>
<div class="t r ep" style="top:1730.08px;font-size:20px;line-height:28px;color:#303b88;letter-spacing:0.049px;left:223.70px;-webkit-text-stroke:0.22px #303b88;">56 endpoints</div>
<div class="t r lb" style="top:1776.08px;font-size:20px;line-height:28px;color:#555555;letter-spacing:0.56px;left:223.70px;-webkit-text-stroke:0.22px #555555;">Allowed/sec</div>
<div class="t r" style="top:1776.08px;font-size:20px;line-height:28px;color:#555555;letter-spacing:-1.426px;right:3409.13px;-webkit-text-stroke:0.22px #555555;">0 B</div>
<svg class="a" style="left:713.0px;top:1780.5px" width="22" height="18" viewBox="0 0 22 18" fill="none" stroke="#555555" stroke-width="1.9" stroke-linecap="round" stroke-linejoin="round"><path d="M7 9H20.5M14.5 2.5L21 9L14.5 15.5M7 1.5H4.5Q1.5 1.5 1.5 4.5V13.5Q1.5 16.5 4.5 16.5H7"/></svg>
<div class="t r" style="top:1776.08px;font-size:20px;line-height:28px;color:#555555;letter-spacing:-1.426px;right:3504.13px;-webkit-text-stroke:0.22px #555555;">0 B</div>
<svg class="a" style="left:618.0px;top:1780.5px" width="22" height="18" viewBox="0 0 22 18" fill="none" stroke="#555555" stroke-width="1.9" stroke-linecap="round" stroke-linejoin="round"><path d="M1 9H14.5M8.5 2.5L15 9L8.5 15.5M15 1.5H17.5Q20.5 1.5 20.5 4.5V13.5Q20.5 16.5 17.5 16.5H15"/></svg>
<div class="t r lb" style="top:1821.08px;font-size:20px;line-height:28px;color:#555555;letter-spacing:0.506px;left:223.70px;-webkit-text-stroke:0.22px #555555;">Denied/sec</div>
<div class="t r" style="top:1821.08px;font-size:20px;line-height:28px;color:#555555;letter-spacing:-1.426px;right:3409.13px;-webkit-text-stroke:0.22px #555555;">0 B</div>
<svg class="a" style="left:713.0px;top:1825.5px" width="22" height="18" viewBox="0 0 22 18" fill="none" stroke="#555555" stroke-width="1.9" stroke-linecap="round" stroke-linejoin="round"><path d="M7 9H20.5M14.5 2.5L21 9L14.5 15.5M7 1.5H4.5Q1.5 1.5 1.5 4.5V13.5Q1.5 16.5 4.5 16.5H7"/></svg>
<div class="t r" style="top:1821.08px;font-size:20px;line-height:28px;color:#555555;letter-spacing:-1.426px;right:3504.13px;-webkit-text-stroke:0.22px #555555;">0 B</div>
<svg class="a" style="left:618.0px;top:1825.5px" width="22" height="18" viewBox="0 0 22 18" fill="none" stroke="#555555" stroke-width="1.9" stroke-linecap="round" stroke-linejoin="round"><path d="M1 9H14.5M8.5 2.5L15 9L8.5 15.5M15 1.5H17.5Q20.5 1.5 20.5 4.5V13.5Q20.5 16.5 17.5 16.5H15"/></svg>
<div class="sep" style="left:200px;top:1874px;width:600px"></div>
<div class="col" style="left:852px"></div>
<div class="t b" style="top:341.61px;font-size:30px;line-height:42px;color:#121212;letter-spacing:0.849px;left:879.50px;-webkit-text-stroke:0.5px #121212;">platform</div>
<svg class="a" style="left:1415px;top:349px" width="10" height="30" viewBox="0 0 10 30" fill="#121212"><circle cx="5" cy="5.4" r="3.1"/><circle cx="5" cy="15.1" r="3.1"/><circle cx="5" cy="24.8" r="3.1"/></svg>
<div class="sep" style="left:856px;top:408px;width:600px"></div>
<div class="t r nm" style="top:433.70px;font-size:24px;line-height:34px;color:#121212;letter-spacing:1.148px;left:879.54px;-webkit-text-stroke:0.3px #121212;">allow-dns</div>
<svg class="a" style="left:1392px;top:435px;overflow:visible" width="40" height="40" viewBox="0 0 40 40"><polygon points="20,0 36,7.7 40,25.5 29,40 11,40 0,25.5 4,7.7" fill="#2e377d"/><circle cx="20" cy="21.2" r="11.6" fill="none" stroke="#fff" stroke-width="1.7"/><path d="M18.5 10.5 L20.5 14 L19 17 L20 19.5 L16 21 L17 23.5 L21 24.5 L24 24 L25.5 27 L23.5 29.5 L22 32.5 M17 23.5 L18 26 L19.5 29 L20 32.5 M9.5 17.5 L12.5 21.5 L16.5 24 L17.5 27.5 L18.5 31.5 M31.3 17 C28 15.5 26 18 27 20.5 C28 22.5 30 22.8 31.5 22.5" fill="none" stroke="#fff" stroke-width="1.6" stroke-linejoin="round" stroke-linecap="round"/></svg>
<div class="t r ns" style="top:441.08px;font-size:20px;line-height:28px;color:#121212;letter-spacing:0.692px;right:2807.01px;-webkit-text-stroke:0.22px #121212;">global</div>
<div class="t r ep" style="top:486.08px;font-size:20px;line-height:28px;color:#303b88;letter-spacing:0.049px;left:879.70px;-webkit-text-stroke:0.22px #303b88;">56 endpoints</div>
<div class="t r lb" style="top:532.08px;font-size:20px;line-height:28px;color:#555555;letter-spacing:0.56px;left:879.70px;-webkit-text-stroke:0.22px #555555;">Allowed/sec</div>
<div class="t r" style="top:532.08px;font-size:20px;line-height:28px;color:#555555;letter-spacing:-0.53px;right:2752.23px;-webkit-text-stroke:0.22px #555555;"><span class="n1">1</span>.<span class="n1">1</span> kB</div>
<svg class="a" style="left:1351.3px;top:537px" width="22" height="18" viewBox="0 0 22 18" fill="none" stroke="#555555" stroke-width="1.9" stroke-linecap="round" stroke-linejoin="round"><path d="M7 9H20.5M14.5 2.5L21 9L14.5 15.5M7 1.5H4.5Q1.5 1.5 1.5 4.5V13.5Q1.5 16.5 4.5 16.5H7"/></svg>
<div class="t r" style="top:532.08px;font-size:20px;line-height:28px;color:#555555;letter-spacing:-0.747px;right:2865.15px;-webkit-text-stroke:0.22px #555555;">665.5 B</div>
<svg class="a" style="left:1213.4px;top:537px" width="22" height="18" viewBox="0 0 22 18" fill="none" stroke="#555555" stroke-width="1.9" stroke-linecap="round" stroke-linejoin="round"><path d="M1 9H14.5M8.5 2.5L15 9L8.5 15.5M15 1.5H17.5Q20.5 1.5 20.5 4.5V13.5Q20.5 16.5 17.5 16.5H15"/></svg>
<div class="t r lb" style="top:577.08px;font-size:20px;line-height:28px;color:#555555;letter-spacing:0.506px;left:879.70px;-webkit-text-stroke:0.22px #555555;">Denied/sec</div>
<div class="t r" style="top:577.08px;font-size:20px;line-height:28px;color:#555555;letter-spacing:-1.426px;right:2753.13px;-webkit-text-stroke:0.22px #555555;">0 B</div>
<svg class="a" style="left:1369.0px;top:582px" width="22" height="18" viewBox="0 0 22 18" fill="none" stroke="#555555" stroke-width="1.9" stroke-linecap="round" stroke-linejoin="round"><path d="M7 9H20.5M14.5 2.5L21 9L14.5 15.5M7 1.5H4.5Q1.5 1.5 1.5 4.5V13.5Q1.5 16.5 4.5 16.5H7"/></svg>
<div class="t r" style="top:577.08px;font-size:20px;line-height:28px;color:#555555;letter-spacing:-1.426px;right:2848.13px;-webkit-text-stroke:0.22px #555555;">0 B</div>
<svg class="a" style="left:1274.0px;top:582px" width="22" height="18" viewBox="0 0 22 18" fill="none" stroke="#555555" stroke-width="1.9" stroke-linecap="round" stroke-linejoin="round"><path d="M1 9H14.5M8.5 2.5L15 9L8.5 15.5M15 1.5H17.5Q20.5 1.5 20.5 4.5V13.5Q20.5 16.5 17.5 16.5H15"/></svg>
<div class="sep" style="left:856px;top:630px;width:600px"></div>
<div class="t r nm" style="top:656.70px;font-size:24px;line-height:34px;color:#121212;letter-spacing:0.649px;left:879.54px;-webkit-text-stroke:0.3px #121212;">default-egress</div>
<svg class="a" style="left:1392px;top:658.25px;overflow:visible" width="40" height="40" viewBox="0 0 40 40"><polygon points="20,0.4 35.8,7.8 39.8,24.8 28.9,38.6 11.1,38.6 0.2,24.8 4.2,7.8" fill="#2e377d" stroke="#fff" stroke-width="1.2"/><rect x="11.2" y="10.8" width="17.6" height="16" fill="none" stroke="#fff" stroke-width="1.3" stroke-dasharray="2.1 1.1"/><text x="20" y="33.6" font-size="6.2" fill="#fff" text-anchor="middle" font-family="Liberation Sans, sans-serif">ns</text></svg>
<div class="t r ns" style="top:664.08px;font-size:20px;line-height:28px;color:#121212;letter-spacing:0.264px;right:2808.44px;-webkit-text-stroke:0.22px #121212;">default</div>
<div class="t r ep" style="top:709.08px;font-size:20px;line-height:28px;color:#303b88;letter-spacing:-0.123px;left:879.70px;-webkit-text-stroke:0.22px #303b88;">2 endpoints</div>
<div class="t r lb" style="top:755.08px;font-size:20px;line-height:28px;color:#555555;letter-spacing:0.56px;left:879.70px;-webkit-text-stroke:0.22px #555555;">Allowed/sec</div>
<div class="t r" style="top:755.08px;font-size:20px;line-height:28px;color:#555555;letter-spacing:-1.426px;right:2753.13px;-webkit-text-stroke:0.22px #555555;">0 B</div>
<svg class="a" style="left:1369.0px;top:759.75px" width="22" height="18" viewBox="0 0 22 18" fill="none" stroke="#555555" stroke-width="1.9" stroke-linecap="round" stroke-linejoin="round"><path d="M7 9H20.5M14.5 2.5L21 9L14.5 15.5M7 1.5H4.5Q1.5 1.5 1.5 4.5V13.5Q1.5 16.5 4.5 16.5H7"/></svg>
<div class="t r" style="top:755.08px;font-size:20px;line-height:28px;color:#555555;letter-spacing:-1.426px;right:2848.13px;-webkit-text-stroke:0.22px #555555;">0 B</div>
<svg class="a" style="left:1274.0px;top:759.75px" width="22" height="18" viewBox="0 0 22 18" fill="none" stroke="#555555" stroke-width="1.9" stroke-linecap="round" stroke-linejoin="round"><path d="M1 9H14.5M8.5 2.5L15 9L8.5 15.5M15 1.5H17.5Q20.5 1.5 20.5 4.5V13.5Q20.5 16.5 17.5 16.5H15"/></svg>
<div class="t r lb" style="top:800.08px;font-size:20px;line-height:28px;color:#555555;letter-spacing:0.506px;left:879.70px;-webkit-text-stroke:0.22px #555555;">Denied/sec</div>
<div class="t r" style="top:800.08px;font-size:20px;line-height:28px;color:#555555;letter-spacing:-1.426px;right:2753.13px;-webkit-text-stroke:0.22px #555555;">0 B</div>
<svg class="a" style="left:1369.0px;top:804.75px" width="22" height="18" viewBox="0 0 22 18" fill="none" stroke="#555555" stroke-width="1.9" stroke-linecap="round" stroke-linejoin="round"><path d="M7 9H20.5M14.5 2.5L21 9L14.5 15.5M7 1.5H4.5Q1.5 1.5 1.5 4.5V13.5Q1.5 16.5 4.5 16.5H7"/></svg>
<div class="t r" style="top:800.08px;font-size:20px;line-height:28px;color:#555555;letter-spacing:-1.426px;right:2848.13px;-webkit-text-stroke:0.22px #555555;">0 B</div>
<svg class="a" style="left:1274.0px;top:804.75px" width="22" height="18" viewBox="0 0 22 18" fill="none" stroke="#555555" stroke-width="1.9" stroke-linecap="round" stroke-linejoin="round"><path d="M1 9H14.5M8.5 2.5L15 9L8.5 15.5M15 1.5H17.5Q20.5 1.5 20.5 4.5V13.5Q20.5 16.5 17.5 16.5H15"/></svg>
<div class="sep" style="left:856px;top:853px;width:600px"></div>
<div class="t r nm" style="top:879.70px;font-size:24px;line-height:34px;color:#121212;letter-spacing:0.947px;left:879.54px;-webkit-text-stroke:0.3px #121212;">platform-default-pass</div>
<svg class="a" style="left:1392px;top:880.5px;overflow:visible" width="40" height="40" viewBox="0 0 40 40"><polygon points="20,0 36,7.7 40,25.5 29,40 11,40 0,25.5 4,7.7" fill="#2e377d"/><circle cx="20" cy="21.2" r="11.6" fill="none" stroke="#fff" stroke-width="1.7"/><path d="M18.5 10.5 L20.5 14 L19 17 L20 19.5 L16 21 L17 23.5 L21 24.5 L24 24 L25.5 27 L23.5 29.5 L22 32.5 M17 23.5 L18 26 L19.5 29 L20 32.5 M9.5 17.5 L12.5 21.5 L16.5 24 L17.5 27.5 L18.5 31.5 M31.3 17 C28 15.5 26 18 27 20.5 C28 22.5 30 22.8 31.5 22.5" fill="none" stroke="#fff" stroke-width="1.6" stroke-linejoin="round" stroke-linecap="round"/></svg>
<div class="t r ns" style="top:886.08px;font-size:20px;line-height:28px;color:#121212;letter-spacing:0.692px;right:2807.01px;-webkit-text-stroke:0.22px #121212;">global</div>
<div class="t r ep" style="top:932.08px;font-size:20px;line-height:28px;color:#303b88;letter-spacing:0.049px;left:879.70px;-webkit-text-stroke:0.22px #303b88;">56 endpoints</div>
<div class="t r lb" style="top:978.08px;font-size:20px;line-height:28px;color:#555555;letter-spacing:0.56px;left:879.70px;-webkit-text-stroke:0.22px #555555;">Allowed/sec</div>
<div class="t r" style="top:978.08px;font-size:20px;line-height:28px;color:#555555;letter-spacing:-1.426px;right:2753.13px;-webkit-text-stroke:0.22px #555555;">0 B</div>
<svg class="a" style="left:1369.0px;top:982.5px" width="22" height="18" viewBox="0 0 22 18" fill="none" stroke="#555555" stroke-width="1.9" stroke-linecap="round" stroke-linejoin="round"><path d="M7 9H20.5M14.5 2.5L21 9L14.5 15.5M7 1.5H4.5Q1.5 1.5 1.5 4.5V13.5Q1.5 16.5 4.5 16.5H7"/></svg>
<div class="t r" style="top:978.08px;font-size:20px;line-height:28px;color:#555555;letter-spacing:-1.426px;right:2848.13px;-webkit-text-stroke:0.22px #555555;">0 B</div>
<svg class="a" style="left:1274.0px;top:982.5px" width="22" height="18" viewBox="0 0 22 18" fill="none" stroke="#555555" stroke-width="1.9" stroke-linecap="round" stroke-linejoin="round"><path d="M1 9H14.5M8.5 2.5L15 9L8.5 15.5M15 1.5H17.5Q20.5 1.5 20.5 4.5V13.5Q20.5 16.5 17.5 16.5H15"/></svg>
<div class="t r lb" style="top:1023.08px;font-size:20px;line-height:28px;color:#555555;letter-spacing:0.506px;left:879.70px;-webkit-text-stroke:0.22px #555555;">Denied/sec</div>
<div class="t r" style="top:1023.08px;font-size:20px;line-height:28px;color:#555555;letter-spacing:-1.426px;right:2753.13px;-webkit-text-stroke:0.22px #555555;">0 B</div>
<svg class="a" style="left:1369.0px;top:1027.5px" width="22" height="18" viewBox="0 0 22 18" fill="none" stroke="#555555" stroke-width="1.9" stroke-linecap="round" stroke-linejoin="round"><path d="M7 9H20.5M14.5 2.5L21 9L14.5 15.5M7 1.5H4.5Q1.5 1.5 1.5 4.5V13.5Q1.5 16.5 4.5 16.5H7"/></svg>
<div class="t r" style="top:1023.08px;font-size:20px;line-height:28px;color:#555555;letter-spacing:-1.426px;right:2848.13px;-webkit-text-stroke:0.22px #555555;">0 B</div>
<svg class="a" style="left:1274.0px;top:1027.5px" width="22" height="18" viewBox="0 0 22 18" fill="none" stroke="#555555" stroke-width="1.9" stroke-linecap="round" stroke-linejoin="round"><path d="M1 9H14.5M8.5 2.5L15 9L8.5 15.5M15 1.5H17.5Q20.5 1.5 20.5 4.5V13.5Q20.5 16.5 17.5 16.5H15"/></svg>
<div class="sep" style="left:856px;top:1076px;width:600px"></div>
<div class="col" style="left:1508px"></div>
<div class="t b" style="top:341.61px;font-size:30px;line-height:42px;color:#121212;letter-spacing:0.926px;left:1535.50px;-webkit-text-stroke:0.5px #121212;">namespace-isolation</div>
<svg class="a" style="left:2071px;top:349px" width="10" height="30" viewBox="0 0 10 30" fill="#121212"><circle cx="5" cy="5.4" r="3.1"/><circle cx="5" cy="15.1" r="3.1"/><circle cx="5" cy="24.8" r="3.1"/></svg>
<div class="sep" style="left:1512px;top:408px;width:600px"></div>
<div class="a" style="left:1512px;top:408px;width:600px;height:224px;background:#dcdde2"></div>
<div class="a" style="left:1760px;top:439px;width:136px;height:32px;border-radius:16px;background:#fff"></div>
<div class="t r" style="top:442.08px;font-size:20px;line-height:28px;color:#121212;letter-spacing:0.192px;left:1791.70px;-webkit-text-stroke:0.22px #121212;">Staged</div>
<div class="t r nm" style="top:433.70px;font-size:24px;line-height:34px;color:#121212;letter-spacing:0.018px;left:1535.54px;-webkit-text-stroke:0.3px #121212;">hipstershop-gh…</div>
<svg class="a" style="left:2048px;top:435.5px;overflow:visible" width="40" height="40" viewBox="0 0 40 40"><polygon points="20,0.4 35.8,7.8 39.8,24.8 28.9,38.6 11.1,38.6 0.2,24.8 4.2,7.8" fill="#2e377d" stroke="#fff" stroke-width="1.2"/><rect x="11.2" y="10.8" width="17.6" height="16" fill="none" stroke="#fff" stroke-width="1.3" stroke-dasharray="2.1 1.1"/><text x="20" y="33.6" font-size="6.2" fill="#fff" text-anchor="middle" font-family="Liberation Sans, sans-serif">ns</text></svg>
<div class="t r ns" style="top:441.08px;font-size:20px;line-height:28px;color:#121212;letter-spacing:0.121px;right:2152.58px;-webkit-text-stroke:0.22px #121212;">hipstershop</div>
<div class="t r ep" style="top:486.08px;font-size:20px;line-height:28px;color:#303b88;letter-spacing:0.012px;left:1537.90px;-webkit-text-stroke:0.22px #303b88;"><span class="n1">1</span>3 endpoints</div>
<div class="t r lb" style="top:532.08px;font-size:20px;line-height:28px;color:#555555;letter-spacing:0.56px;left:1535.70px;-webkit-text-stroke:0.22px #555555;">Allowed/sec</div>
<div class="t r" style="top:532.08px;font-size:20px;line-height:28px;color:#555555;letter-spacing:-0.53px;right:2096.23px;-webkit-text-stroke:0.22px #555555;"><span class="n1">1</span>.<span class="n1">1</span> kB</div>
<svg class="a" style="left:2007.3px;top:537px" width="22" height="18" viewBox="0 0 22 18" fill="none" stroke="#555555" stroke-width="1.9" stroke-linecap="round" stroke-linejoin="round"><path d="M7 9H20.5M14.5 2.5L21 9L14.5 15.5M7 1.5H4.5Q1.5 1.5 1.5 4.5V13.5Q1.5 16.5 4.5 16.5H7"/></svg>
<div class="t r" style="top:532.08px;font-size:20px;line-height:28px;color:#555555;letter-spacing:-1.124px;right:2209.52px;-webkit-text-stroke:0.22px #555555;">24.2 kB</div>
<svg class="a" style="left:1872.8px;top:537px" width="22" height="18" viewBox="0 0 22 18" fill="none" stroke="#555555" stroke-width="1.9" stroke-linecap="round" stroke-linejoin="round"><path d="M1 9H14.5M8.5 2.5L15 9L8.5 15.5M15 1.5H17.5Q20.5 1.5 20.5 4.5V13.5Q20.5 16.5 17.5 16.5H15"/></svg>
<div class="t r lb" style="top:577.08px;font-size:20px;line-height:28px;color:#555555;letter-spacing:0.506px;left:1535.70px;-webkit-text-stroke:0.22px #555555;">Denied/sec</div>
<div class="t r" style="top:577.08px;font-size:20px;line-height:28px;color:#555555;letter-spacing:-1.426px;right:2097.13px;-webkit-text-stroke:0.22px #555555;">0 B</div>
<svg class="a" style="left:2025.0px;top:582px" width="22" height="18" viewBox="0 0 22 18" fill="none" stroke="#555555" stroke-width="1.9" stroke-linecap="round" stroke-linejoin="round"><path d="M7 9H20.5M14.5 2.5L21 9L14.5 15.5M7 1.5H4.5Q1.5 1.5 1.5 4.5V13.5Q1.5 16.5 4.5 16.5H7"/></svg>
<div class="t r" style="top:577.08px;font-size:20px;line-height:28px;color:#555555;letter-spacing:-1.426px;right:2192.13px;-webkit-text-stroke:0.22px #555555;">0 B</div>
<svg class="a" style="left:1930.0px;top:582px" width="22" height="18" viewBox="0 0 22 18" fill="none" stroke="#555555" stroke-width="1.9" stroke-linecap="round" stroke-linejoin="round"><path d="M1 9H14.5M8.5 2.5L15 9L8.5 15.5M15 1.5H17.5Q20.5 1.5 20.5 4.5V13.5Q20.5 16.5 17.5 16.5H15"/></svg>
<div class="t r nm" style="top:656.70px;font-size:24px;line-height:34px;color:#121212;letter-spacing:0.683px;left:1535.54px;-webkit-text-stroke:0.3px #121212;">namespace-isolation-default-p…</div>
<svg class="a" style="left:2048px;top:657.75px;overflow:visible" width="40" height="40" viewBox="0 0 40 40"><polygon points="20,0 36,7.7 40,25.5 29,40 11,40 0,25.5 4,7.7" fill="#2e377d"/><circle cx="20" cy="21.2" r="11.6" fill="none" stroke="#fff" stroke-width="1.7"/><path d="M18.5 10.5 L20.5 14 L19 17 L20 19.5 L16 21 L17 23.5 L21 24.5 L24 24 L25.5 27 L23.5 29.5 L22 32.5 M17 23.5 L18 26 L19.5 29 L20 32.5 M9.5 17.5 L12.5 21.5 L16.5 24 L17.5 27.5 L18.5 31.5 M31.3 17 C28 15.5 26 18 27 20.5 C28 22.5 30 22.8 31.5 22.5" fill="none" stroke="#fff" stroke-width="1.6" stroke-linejoin="round" stroke-linecap="round"/></svg>
<div class="t r ns" style="top:664.08px;font-size:20px;line-height:28px;color:#121212;letter-spacing:0.692px;right:2151.01px;-webkit-text-stroke:0.22px #121212;">global</div>
<div class="t r ep" style="top:709.08px;font-size:20px;line-height:28px;color:#303b88;letter-spacing:0.049px;left:1535.70px;-webkit-text-stroke:0.22px #303b88;">56 endpoints</div>
<div class="t r lb" style="top:755.08px;font-size:20px;line-height:28px;color:#555555;letter-spacing:0.56px;left:1535.70px;-webkit-text-stroke:0.22px #555555;">Allowed/sec</div>
<div class="t r" style="top:755.08px;font-size:20px;line-height:28px;color:#555555;letter-spacing:-1.426px;right:2097.13px;-webkit-text-stroke:0.22px #555555;">0 B</div>
<svg class="a" style="left:2025.0px;top:759.75px" width="22" height="18" viewBox="0 0 22 18" fill="none" stroke="#555555" stroke-width="1.9" stroke-linecap="round" stroke-linejoin="round"><path d="M7 9H20.5M14.5 2.5L21 9L14.5 15.5M7 1.5H4.5Q1.5 1.5 1.5 4.5V13.5Q1.5 16.5 4.5 16.5H7"/></svg>
<div class="t r" style="top:755.08px;font-size:20px;line-height:28px;color:#555555;letter-spacing:-1.426px;right:2192.13px;-webkit-text-stroke:0.22px #555555;">0 B</div>
<svg class="a" style="left:1930.0px;top:759.75px" width="22" height="18" viewBox="0 0 22 18" fill="none" stroke="#555555" stroke-width="1.9" stroke-linecap="round" stroke-linejoin="round"><path d="M1 9H14.5M8.5 2.5L15 9L8.5 15.5M15 1.5H17.5Q20.5 1.5 20.5 4.5V13.5Q20.5 16.5 17.5 16.5H15"/></svg>
<div class="t r lb" style="top:800.08px;font-size:20px;line-height:28px;color:#555555;letter-spacing:0.506px;left:1535.70px;-webkit-text-stroke:0.22px #555555;">Denied/sec</div>
<div class="t r" style="top:800.08px;font-size:20px;line-height:28px;color:#555555;letter-spacing:-1.426px;right:2097.13px;-webkit-text-stroke:0.22px #555555;">0 B</div>
<svg class="a" style="left:2025.0px;top:804.75px" width="22" height="18" viewBox="0 0 22 18" fill="none" stroke="#555555" stroke-width="1.9" stroke-linecap="round" stroke-linejoin="round"><path d="M7 9H20.5M14.5 2.5L21 9L14.5 15.5M7 1.5H4.5Q1.5 1.5 1.5 4.5V13.5Q1.5 16.5 4.5 16.5H7"/></svg>
<div class="t r" style="top:800.08px;font-size:20px;line-height:28px;color:#555555;letter-spacing:-1.426px;right:2192.13px;-webkit-text-stroke:0.22px #555555;">0 B</div>
<svg class="a" style="left:1930.0px;top:804.75px" width="22" height="18" viewBox="0 0 22 18" fill="none" stroke="#555555" stroke-width="1.9" stroke-linecap="round" stroke-linejoin="round"><path d="M1 9H14.5M8.5 2.5L15 9L8.5 15.5M15 1.5H17.5Q20.5 1.5 20.5 4.5V13.5Q20.5 16.5 17.5 16.5H15"/></svg>
<div class="sep" style="left:1512px;top:853px;width:600px"></div>
<div class="col" style="left:2164px"></div>
<div class="t b" style="top:341.61px;font-size:30px;line-height:42px;color:#121212;letter-spacing:0.78px;left:2191.50px;-webkit-text-stroke:0.5px #121212;">app-hipstershop</div>
<svg class="a" style="left:2727px;top:349px" width="10" height="30" viewBox="0 0 10 30" fill="#121212"><circle cx="5" cy="5.4" r="3.1"/><circle cx="5" cy="15.1" r="3.1"/><circle cx="5" cy="24.8" r="3.1"/></svg>
<div class="sep" style="left:2168px;top:408px;width:600px"></div>
<div class="t r nm" style="top:433.70px;font-size:24px;line-height:34px;color:#121212;letter-spacing:0.283px;left:2191.54px;-webkit-text-stroke:0.3px #121212;">checkoutservice</div>
<svg class="a" style="left:2704px;top:435.5px;overflow:visible" width="40" height="40" viewBox="0 0 40 40"><polygon points="20,0.4 35.8,7.8 39.8,24.8 28.9,38.6 11.1,38.6 0.2,24.8 4.2,7.8" fill="#2e377d" stroke="#fff" stroke-width="1.2"/><rect x="11.2" y="10.8" width="17.6" height="16" fill="none" stroke="#fff" stroke-width="1.3" stroke-dasharray="2.1 1.1"/><text x="20" y="33.6" font-size="6.2" fill="#fff" text-anchor="middle" font-family="Liberation Sans, sans-serif">ns</text></svg>
<div class="t r ns" style="top:441.08px;font-size:20px;line-height:28px;color:#121212;letter-spacing:0.121px;right:1496.58px;-webkit-text-stroke:0.22px #121212;">hipstershop</div>
<div class="t r ep" style="top:486.08px;font-size:20px;line-height:28px;color:#303b88;letter-spacing:0.035px;left:2193.90px;-webkit-text-stroke:0.22px #303b88;"><span class="n1">1</span> endpoints</div>
<div class="t r lb" style="top:532.08px;font-size:20px;line-height:28px;color:#555555;letter-spacing:0.56px;left:2191.70px;-webkit-text-stroke:0.22px #555555;">Allowed/sec</div>
<div class="t r" style="top:532.08px;font-size:20px;line-height:28px;color:#555555;letter-spacing:-1.426px;right:1441.13px;-webkit-text-stroke:0.22px #555555;">0 B</div>
<svg class="a" style="left:2681.0px;top:537px" width="22" height="18" viewBox="0 0 22 18" fill="none" stroke="#555555" stroke-width="1.9" stroke-linecap="round" stroke-linejoin="round"><path d="M7 9H20.5M14.5 2.5L21 9L14.5 15.5M7 1.5H4.5Q1.5 1.5 1.5 4.5V13.5Q1.5 16.5 4.5 16.5H7"/></svg>
<div class="t r" style="top:532.08px;font-size:20px;line-height:28px;color:#555555;letter-spacing:-1.426px;right:1536.13px;-webkit-text-stroke:0.22px #555555;">0 B</div>
<svg class="a" style="left:2586.0px;top:537px" width="22" height="18" viewBox="0 0 22 18" fill="none" stroke="#555555" stroke-width="1.9" stroke-linecap="round" stroke-linejoin="round"><path d="M1 9H14.5M8.5 2.5L15 9L8.5 15.5M15 1.5H17.5Q20.5 1.5 20.5 4.5V13.5Q20.5 16.5 17.5 16.5H15"/></svg>
<div class="t r lb" style="top:577.08px;font-size:20px;line-height:28px;color:#555555;letter-spacing:0.506px;left:2191.70px;-webkit-text-stroke:0.22px #555555;">Denied/sec</div>
<div class="t r" style="top:577.08px;font-size:20px;line-height:28px;color:#555555;letter-spacing:-1.426px;right:1441.13px;-webkit-text-stroke:0.22px #555555;">0 B</div>
<svg class="a" style="left:2681.0px;top:582px" width="22" height="18" viewBox="0 0 22 18" fill="none" stroke="#555555" stroke-width="1.9" stroke-linecap="round" stroke-linejoin="round"><path d="M7 9H20.5M14.5 2.5L21 9L14.5 15.5M7 1.5H4.5Q1.5 1.5 1.5 4.5V13.5Q1.5 16.5 4.5 16.5H7"/></svg>
<div class="t r" style="top:577.08px;font-size:20px;line-height:28px;color:#555555;letter-spacing:-1.426px;right:1536.13px;-webkit-text-stroke:0.22px #555555;">0 B</div>
<svg class="a" style="left:2586.0px;top:582px" width="22" height="18" viewBox="0 0 22 18" fill="none" stroke="#555555" stroke-width="1.9" stroke-linecap="round" stroke-linejoin="round"><path d="M1 9H14.5M8.5 2.5L15 9L8.5 15.5M15 1.5H17.5Q20.5 1.5 20.5 4.5V13.5Q20.5 16.5 17.5 16.5H15"/></svg>
<div class="sep" style="left:2168px;top:630px;width:600px"></div>
<div class="t r nm" style="top:656.70px;font-size:24px;line-height:34px;color:#121212;letter-spacing:0.2px;left:2191.54px;-webkit-text-stroke:0.3px #121212;">cartservice</div>
<svg class="a" style="left:2704px;top:658.25px;overflow:visible" width="40" height="40" viewBox="0 0 40 40"><polygon points="20,0.4 35.8,7.8 39.8,24.8 28.9,38.6 11.1,38.6 0.2,24.8 4.2,7.8" fill="#2e377d" stroke="#fff" stroke-width="1.2"/><rect x="11.2" y="10.8" width="17.6" height="16" fill="none" stroke="#fff" stroke-width="1.3" stroke-dasharray="2.1 1.1"/><text x="20" y="33.6" font-size="6.2" fill="#fff" text-anchor="middle" font-family="Liberation Sans, sans-serif">ns</text></svg>
<div class="t r ns" style="top:664.08px;font-size:20px;line-height:28px;color:#121212;letter-spacing:0.121px;right:1496.58px;-webkit-text-stroke:0.22px #121212;">hipstershop</div>
<div class="t r ep" style="top:709.08px;font-size:20px;line-height:28px;color:#303b88;letter-spacing:0.035px;left:2193.90px;-webkit-text-stroke:0.22px #303b88;"><span class="n1">1</span> endpoints</div>
<div class="t r lb" style="top:755.08px;font-size:20px;line-height:28px;color:#555555;letter-spacing:0.56px;left:2191.70px;-webkit-text-stroke:0.22px #555555;">Allowed/sec</div>
<div class="t r" style="top:755.08px;font-size:20px;line-height:28px;color:#555555;letter-spacing:-1.426px;right:1441.13px;-webkit-text-stroke:0.22px #555555;">0 B</div>
<svg class="a" style="left:2681.0px;top:759.75px" width="22" height="18" viewBox="0 0 22 18" fill="none" stroke="#555555" stroke-width="1.9" stroke-linecap="round" stroke-linejoin="round"><path d="M7 9H20.5M14.5 2.5L21 9L14.5 15.5M7 1.5H4.5Q1.5 1.5 1.5 4.5V13.5Q1.5 16.5 4.5 16.5H7"/></svg>
<div class="t r" style="top:755.08px;font-size:20px;line-height:28px;color:#555555;letter-spacing:-1.426px;right:1536.13px;-webkit-text-stroke:0.22px #555555;">0 B</div>
<svg class="a" style="left:2586.0px;top:759.75px" width="22" height="18" viewBox="0 0 22 18" fill="none" stroke="#555555" stroke-width="1.9" stroke-linecap="round" stroke-linejoin="round"><path d="M1 9H14.5M8.5 2.5L15 9L8.5 15.5M15 1.5H17.5Q20.5 1.5 20.5 4.5V13.5Q20.5 16.5 17.5 16.5H15"/></svg>
<div class="t r lb" style="top:800.08px;font-size:20px;line-height:28px;color:#555555;letter-spacing:0.506px;left:2191.70px;-webkit-text-stroke:0.22px #555555;">Denied/sec</div>
<div class="t r" style="top:800.08px;font-size:20px;line-height:28px;color:#555555;letter-spacing:-1.426px;right:1441.13px;-webkit-text-stroke:0.22px #555555;">0 B</div>
<svg class="a" style="left:2681.0px;top:804.75px" width="22" height="18" viewBox="0 0 22 18" fill="none" stroke="#555555" stroke-width="1.9" stroke-linecap="round" stroke-linejoin="round"><path d="M7 9H20.5M14.5 2.5L21 9L14.5 15.5M7 1.5H4.5Q1.5 1.5 1.5 4.5V13.5Q1.5 16.5 4.5 16.5H7"/></svg>
<div class="t r" style="top:800.08px;font-size:20px;line-height:28px;color:#555555;letter-spacing:-1.426px;right:1536.13px;-webkit-text-stroke:0.22px #555555;">0 B</div>
<svg class="a" style="left:2586.0px;top:804.75px" width="22" height="18" viewBox="0 0 22 18" fill="none" stroke="#555555" stroke-width="1.9" stroke-linecap="round" stroke-linejoin="round"><path d="M1 9H14.5M8.5 2.5L15 9L8.5 15.5M15 1.5H17.5Q20.5 1.5 20.5 4.5V13.5Q20.5 16.5 17.5 16.5H15"/></svg>
<div class="sep" style="left:2168px;top:853px;width:600px"></div>
<div class="t r nm" style="top:879.70px;font-size:24px;line-height:34px;color:#121212;letter-spacing:0.463px;left:2191.54px;-webkit-text-stroke:0.3px #121212;">productcatalogservice</div>
<svg class="a" style="left:2704px;top:881.0px;overflow:visible" width="40" height="40" viewBox="0 0 40 40"><polygon points="20,0.4 35.8,7.8 39.8,24.8 28.9,38.6 11.1,38.6 0.2,24.8 4.2,7.8" fill="#2e377d" stroke="#fff" stroke-width="1.2"/><rect x="11.2" y="10.8" width="17.6" height="16" fill="none" stroke="#fff" stroke-width="1.3" stroke-dasharray="2.1 1.1"/><text x="20" y="33.6" font-size="6.2" fill="#fff" text-anchor="middle" font-family="Liberation Sans, sans-serif">ns</text></svg>
<div class="t r ns" style="top:886.08px;font-size:20px;line-height:28px;color:#121212;letter-spacing:0.121px;right:1496.58px;-webkit-text-stroke:0.22px #121212;">hipstershop</div>
<div class="t r ep" style="top:932.08px;font-size:20px;line-height:28px;color:#303b88;letter-spacing:0.035px;left:2193.90px;-webkit-text-stroke:0.22px #303b88;"><span class="n1">1</span> endpoints</div>
<div class="t r lb" style="top:978.08px;font-size:20px;line-height:28px;color:#555555;letter-spacing:0.56px;left:2191.70px;-webkit-text-stroke:0.22px #555555;">Allowed/sec</div>
<div class="t r" style="top:978.08px;font-size:20px;line-height:28px;color:#555555;letter-spacing:-1.426px;right:1441.13px;-webkit-text-stroke:0.22px #555555;">0 B</div>
<svg class="a" style="left:2681.0px;top:982.5px" width="22" height="18" viewBox="0 0 22 18" fill="none" stroke="#555555" stroke-width="1.9" stroke-linecap="round" stroke-linejoin="round"><path d="M7 9H20.5M14.5 2.5L21 9L14.5 15.5M7 1.5H4.5Q1.5 1.5 1.5 4.5V13.5Q1.5 16.5 4.5 16.5H7"/></svg>
<div class="t r" style="top:978.08px;font-size:20px;line-height:28px;color:#555555;letter-spacing:-1.426px;right:1536.13px;-webkit-text-stroke:0.22px #555555;">0 B</div>
<svg class="a" style="left:2586.0px;top:982.5px" width="22" height="18" viewBox="0 0 22 18" fill="none" stroke="#555555" stroke-width="1.9" stroke-linecap="round" stroke-linejoin="round"><path d="M1 9H14.5M8.5 2.5L15 9L8.5 15.5M15 1.5H17.5Q20.5 1.5 20.5 4.5V13.5Q20.5 16.5 17.5 16.5H15"/></svg>
<div class="t r lb" style="top:1023.08px;font-size:20px;line-height:28px;color:#555555;letter-spacing:0.506px;left:2191.70px;-webkit-text-stroke:0.22px #555555;">Denied/sec</div>
<div class="t r" style="top:1023.08px;font-size:20px;line-height:28px;color:#555555;letter-spacing:-1.426px;right:1441.13px;-webkit-text-stroke:0.22px #555555;">0 B</div>
<svg class="a" style="left:2681.0px;top:1027.5px" width="22" height="18" viewBox="0 0 22 18" fill="none" stroke="#555555" stroke-width="1.9" stroke-linecap="round" stroke-linejoin="round"><path d="M7 9H20.5M14.5 2.5L21 9L14.5 15.5M7 1.5H4.5Q1.5 1.5 1.5 4.5V13.5Q1.5 16.5 4.5 16.5H7"/></svg>
<div class="t r" style="top:1023.08px;font-size:20px;line-height:28px;color:#555555;letter-spacing:-1.426px;right:1536.13px;-webkit-text-stroke:0.22px #555555;">0 B</div>
<svg class="a" style="left:2586.0px;top:1027.5px" width="22" height="18" viewBox="0 0 22 18" fill="none" stroke="#555555" stroke-width="1.9" stroke-linecap="round" stroke-linejoin="round"><path d="M1 9H14.5M8.5 2.5L15 9L8.5 15.5M15 1.5H17.5Q20.5 1.5 20.5 4.5V13.5Q20.5 16.5 17.5 16.5H15"/></svg>
<div class="sep" style="left:2168px;top:1076px;width:600px"></div>
<div class="t r nm" style="top:1101.70px;font-size:24px;line-height:34px;color:#121212;letter-spacing:0.12px;left:2191.54px;-webkit-text-stroke:0.3px #121212;">frontend</div>
<svg class="a" style="left:2704px;top:1103.75px;overflow:visible" width="40" height="40" viewBox="0 0 40 40"><polygon points="20,0.4 35.8,7.8 39.8,24.8 28.9,38.6 11.1,38.6 0.2,24.8 4.2,7.8" fill="#2e377d" stroke="#fff" stroke-width="1.2"/><rect x="11.2" y="10.8" width="17.6" height="16" fill="none" stroke="#fff" stroke-width="1.3" stroke-dasharray="2.1 1.1"/><text x="20" y="33.6" font-size="6.2" fill="#fff" text-anchor="middle" font-family="Liberation Sans, sans-serif">ns</text></svg>
<div class="t r ns" style="top:1109.08px;font-size:20px;line-height:28px;color:#121212;letter-spacing:0.121px;right:1496.58px;-webkit-text-stroke:0.22px #121212;">hipstershop</div>
<div class="t r ep" style="top:1154.08px;font-size:20px;line-height:28px;color:#303b88;letter-spacing:0.035px;left:2193.90px;-webkit-text-stroke:0.22px #303b88;"><span class="n1">1</span> endpoints</div>
<div class="t r lb" style="top:1200.08px;font-size:20px;line-height:28px;color:#555555;letter-spacing:0.56px;left:2191.70px;-webkit-text-stroke:0.22px #555555;">Allowed/sec</div>
<div class="t r" style="top:1200.08px;font-size:20px;line-height:28px;color:#555555;letter-spacing:-1.426px;right:1441.13px;-webkit-text-stroke:0.22px #555555;">0 B</div>
<svg class="a" style="left:2681.0px;top:1205.25px" width="22" height="18" viewBox="0 0 22 18" fill="none" stroke="#555555" stroke-width="1.9" stroke-linecap="round" stroke-linejoin="round"><path d="M7 9H20.5M14.5 2.5L21 9L14.5 15.5M7 1.5H4.5Q1.5 1.5 1.5 4.5V13.5Q1.5 16.5 4.5 16.5H7"/></svg>
<div class="t r" style="top:1200.08px;font-size:20px;line-height:28px;color:#555555;letter-spacing:-1.426px;right:1536.13px;-webkit-text-stroke:0.22px #555555;">0 B</div>
<svg class="a" style="left:2586.0px;top:1205.25px" width="22" height="18" viewBox="0 0 22 18" fill="none" stroke="#555555" stroke-width="1.9" stroke-linecap="round" stroke-linejoin="round"><path d="M1 9H14.5M8.5 2.5L15 9L8.5 15.5M15 1.5H17.5Q20.5 1.5 20.5 4.5V13.5Q20.5 16.5 17.5 16.5H15"/></svg>
<div class="t r lb" style="top:1245.08px;font-size:20px;line-height:28px;color:#555555;letter-spacing:0.506px;left:2191.70px;-webkit-text-stroke:0.22px #555555;">Denied/sec</div>
<div class="t r" style="top:1245.08px;font-size:20px;line-height:28px;color:#555555;letter-spacing:-1.426px;right:1441.13px;-webkit-text-stroke:0.22px #555555;">0 B</div>
<svg class="a" style="left:2681.0px;top:1250.25px" width="22" height="18" viewBox="0 0 22 18" fill="none" stroke="#555555" stroke-width="1.9" stroke-linecap="round" stroke-linejoin="round"><path d="M7 9H20.5M14.5 2.5L21 9L14.5 15.5M7 1.5H4.5Q1.5 1.5 1.5 4.5V13.5Q1.5 16.5 4.5 16.5H7"/></svg>
<div class="t r" style="top:1245.08px;font-size:20px;line-height:28px;color:#555555;letter-spacing:-1.426px;right:1536.13px;-webkit-text-stroke:0.22px #555555;">0 B</div>
<svg class="a" style="left:2586.0px;top:1250.25px" width="22" height="18" viewBox="0 0 22 18" fill="none" stroke="#555555" stroke-width="1.9" stroke-linecap="round" stroke-linejoin="round"><path d="M1 9H14.5M8.5 2.5L15 9L8.5 15.5M15 1.5H17.5Q20.5 1.5 20.5 4.5V13.5Q20.5 16.5 17.5 16.5H15"/></svg>
<div class="sep" style="left:2168px;top:1299px;width:600px"></div>
<div class="t r nm" style="top:1324.70px;font-size:24px;line-height:34px;color:#121212;letter-spacing:0.921px;left:2191.54px;-webkit-text-stroke:0.3px #121212;">redis-cart</div>
<svg class="a" style="left:2704px;top:1326.5px;overflow:visible" width="40" height="40" viewBox="0 0 40 40"><polygon points="20,0.4 35.8,7.8 39.8,24.8 28.9,38.6 11.1,38.6 0.2,24.8 4.2,7.8" fill="#2e377d" stroke="#fff" stroke-width="1.2"/><rect x="11.2" y="10.8" width="17.6" height="16" fill="none" stroke="#fff" stroke-width="1.3" stroke-dasharray="2.1 1.1"/><text x="20" y="33.6" font-size="6.2" fill="#fff" text-anchor="middle" font-family="Liberation Sans, sans-serif">ns</text></svg>
<div class="t r ns" style="top:1332.08px;font-size:20px;line-height:28px;color:#121212;letter-spacing:0.121px;right:1496.58px;-webkit-text-stroke:0.22px #121212;">hipstershop</div>
<div class="t r ep" style="top:1377.08px;font-size:20px;line-height:28px;color:#303b88;letter-spacing:0.035px;left:2193.90px;-webkit-text-stroke:0.22px #303b88;"><span class="n1">1</span> endpoints</div>
<div class="t r lb" style="top:1423.08px;font-size:20px;line-height:28px;color:#555555;letter-spacing:0.56px;left:2191.70px;-webkit-text-stroke:0.22px #555555;">Allowed/sec</div>
<div class="t r" style="top:1423.08px;font-size:20px;line-height:28px;color:#555555;letter-spacing:-1.426px;right:1441.13px;-webkit-text-stroke:0.22px #555555;">0 B</div>
<svg class="a" style="left:2681.0px;top:1428.0px" width="22" height="18" viewBox="0 0 22 18" fill="none" stroke="#555555" stroke-width="1.9" stroke-linecap="round" stroke-linejoin="round"><path d="M7 9H20.5M14.5 2.5L21 9L14.5 15.5M7 1.5H4.5Q1.5 1.5 1.5 4.5V13.5Q1.5 16.5 4.5 16.5H7"/></svg>
<div class="t r" style="top:1423.08px;font-size:20px;line-height:28px;color:#555555;letter-spacing:-1.426px;right:1536.13px;-webkit-text-stroke:0.22px #555555;">0 B</div>
<svg class="a" style="left:2586.0px;top:1428.0px" width="22" height="18" viewBox="0 0 22 18" fill="none" stroke="#555555" stroke-width="1.9" stroke-linecap="round" stroke-linejoin="round"><path d="M1 9H14.5M8.5 2.5L15 9L8.5 15.5M15 1.5H17.5Q20.5 1.5 20.5 4.5V13.5Q20.5 16.5 17.5 16.5H15"/></svg>
<div class="t r lb" style="top:1468.08px;font-size:20px;line-height:28px;color:#555555;letter-spacing:0.506px;left:2191.70px;-webkit-text-stroke:0.22px #555555;">Denied/sec</div>
<div class="t r" style="top:1468.08px;font-size:20px;line-height:28px;color:#555555;letter-spacing:-1.426px;right:1441.13px;-webkit-text-stroke:0.22px #555555;">0 B</div>
<svg class="a" style="left:2681.0px;top:1473.0px" width="22" height="18" viewBox="0 0 22 18" fill="none" stroke="#555555" stroke-width="1.9" stroke-linecap="round" stroke-linejoin="round"><path d="M7 9H20.5M14.5 2.5L21 9L14.5 15.5M7 1.5H4.5Q1.5 1.5 1.5 4.5V13.5Q1.5 16.5 4.5 16.5H7"/></svg>
<div class="t r" style="top:1468.08px;font-size:20px;line-height:28px;color:#555555;letter-spacing:-1.426px;right:1536.13px;-webkit-text-stroke:0.22px #555555;">0 B</div>
<svg class="a" style="left:2586.0px;top:1473.0px" width="22" height="18" viewBox="0 0 22 18" fill="none" stroke="#555555" stroke-width="1.9" stroke-linecap="round" stroke-linejoin="round"><path d="M1 9H14.5M8.5 2.5L15 9L8.5 15.5M15 1.5H17.5Q20.5 1.5 20.5 4.5V13.5Q20.5 16.5 17.5 16.5H15"/></svg>
<div class="sep" style="left:2168px;top:1521px;width:600px"></div>
<div class="t r nm" style="top:1547.70px;font-size:24px;line-height:34px;color:#121212;letter-spacing:0.227px;left:2191.54px;-webkit-text-stroke:0.3px #121212;">emailservice</div>
<svg class="a" style="left:2704px;top:1549.25px;overflow:visible" width="40" height="40" viewBox="0 0 40 40"><polygon points="20,0.4 35.8,7.8 39.8,24.8 28.9,38.6 11.1,38.6 0.2,24.8 4.2,7.8" fill="#2e377d" stroke="#fff" stroke-width="1.2"/><rect x="11.2" y="10.8" width="17.6" height="16" fill="none" stroke="#fff" stroke-width="1.3" stroke-dasharray="2.1 1.1"/><text x="20" y="33.6" font-size="6.2" fill="#fff" text-anchor="middle" font-family="Liberation Sans, sans-serif">ns</text></svg>
<div class="t r ns" style="top:1555.08px;font-size:20px;line-height:28px;color:#121212;letter-spacing:0.121px;right:1496.58px;-webkit-text-stroke:0.22px #121212;">hipstershop</div>
<div class="t r ep" style="top:1600.08px;font-size:20px;line-height:28px;color:#303b88;letter-spacing:0.035px;left:2193.90px;-webkit-text-stroke:0.22px #303b88;"><span class="n1">1</span> endpoints</div>
<div class="t r lb" style="top:1646.08px;font-size:20px;line-height:28px;color:#555555;letter-spacing:0.56px;left:2191.70px;-webkit-text-stroke:0.22px #555555;">Allowed/sec</div>
<div class="t r" style="top:1646.08px;font-size:20px;line-height:28px;color:#555555;letter-spacing:-1.426px;right:1441.13px;-webkit-text-stroke:0.22px #555555;">0 B</div>
<svg class="a" style="left:2681.0px;top:1650.75px" width="22" height="18" viewBox="0 0 22 18" fill="none" stroke="#555555" stroke-width="1.9" stroke-linecap="round" stroke-linejoin="round"><path d="M7 9H20.5M14.5 2.5L21 9L14.5 15.5M7 1.5H4.5Q1.5 1.5 1.5 4.5V13.5Q1.5 16.5 4.5 16.5H7"/></svg>
<div class="t r" style="top:1646.08px;font-size:20px;line-height:28px;color:#555555;letter-spacing:-1.426px;right:1536.13px;-webkit-text-stroke:0.22px #555555;">0 B</div>
<svg class="a" style="left:2586.0px;top:1650.75px" width="22" height="18" viewBox="0 0 22 18" fill="none" stroke="#555555" stroke-width="1.9" stroke-linecap="round" stroke-linejoin="round"><path d="M1 9H14.5M8.5 2.5L15 9L8.5 15.5M15 1.5H17.5Q20.5 1.5 20.5 4.5V13.5Q20.5 16.5 17.5 16.5H15"/></svg>
<div class="t r lb" style="top:1691.08px;font-size:20px;line-height:28px;color:#555555;letter-spacing:0.506px;left:2191.70px;-webkit-text-stroke:0.22px #555555;">Denied/sec</div>
<div class="t r" style="top:1691.08px;font-size:20px;line-height:28px;color:#555555;letter-spacing:-1.426px;right:1441.13px;-webkit-text-stroke:0.22px #555555;">0 B</div>
<svg class="a" style="left:2681.0px;top:1695.75px" width="22" height="18" viewBox="0 0 22 18" fill="none" stroke="#555555" stroke-width="1.9" stroke-linecap="round" stroke-linejoin="round"><path d="M7 9H20.5M14.5 2.5L21 9L14.5 15.5M7 1.5H4.5Q1.5 1.5 1.5 4.5V13.5Q1.5 16.5 4.5 16.5H7"/></svg>
<div class="t r" style="top:1691.08px;font-size:20px;line-height:28px;color:#555555;letter-spacing:-1.426px;right:1536.13px;-webkit-text-stroke:0.22px #555555;">0 B</div>
<svg class="a" style="left:2586.0px;top:1695.75px" width="22" height="18" viewBox="0 0 22 18" fill="none" stroke="#555555" stroke-width="1.9" stroke-linecap="round" stroke-linejoin="round"><path d="M1 9H14.5M8.5 2.5L15 9L8.5 15.5M15 1.5H17.5Q20.5 1.5 20.5 4.5V13.5Q20.5 16.5 17.5 16.5H15"/></svg>
<div class="sep" style="left:2168px;top:1744px;width:600px"></div>
<div class="col" style="left:2820px"></div>
<div class="t b" style="top:341.61px;font-size:30px;line-height:42px;color:#121212;letter-spacing:1.846px;left:2847.50px;-webkit-text-stroke:0.5px #121212;">app-vote</div>
<svg class="a" style="left:3383px;top:349px" width="10" height="30" viewBox="0 0 10 30" fill="#121212"><circle cx="5" cy="5.4" r="3.1"/><circle cx="5" cy="15.1" r="3.1"/><circle cx="5" cy="24.8" r="3.1"/></svg>
<div class="sep" style="left:2824px;top:408px;width:600px"></div>
<div class="t r nm" style="top:433.70px;font-size:24px;line-height:34px;color:#121212;letter-spacing:0.992px;left:2847.54px;-webkit-text-stroke:0.3px #121212;">vote-default-pass</div>
<svg class="a" style="left:3360px;top:435px;overflow:visible" width="40" height="40" viewBox="0 0 40 40"><polygon points="20,0 36,7.7 40,25.5 29,40 11,40 0,25.5 4,7.7" fill="#2e377d"/><circle cx="20" cy="21.2" r="11.6" fill="none" stroke="#fff" stroke-width="1.7"/><path d="M18.5 10.5 L20.5 14 L19 17 L20 19.5 L16 21 L17 23.5 L21 24.5 L24 24 L25.5 27 L23.5 29.5 L22 32.5 M17 23.5 L18 26 L19.5 29 L20 32.5 M9.5 17.5 L12.5 21.5 L16.5 24 L17.5 27.5 L18.5 31.5 M31.3 17 C28 15.5 26 18 27 20.5 C28 22.5 30 22.8 31.5 22.5" fill="none" stroke="#fff" stroke-width="1.6" stroke-linejoin="round" stroke-linecap="round"/></svg>
<div class="t r ns" style="top:441.08px;font-size:20px;line-height:28px;color:#121212;letter-spacing:0.692px;right:839.01px;-webkit-text-stroke:0.22px #121212;">global</div>
<div class="t r ep" style="top:486.08px;font-size:20px;line-height:28px;color:#303b88;letter-spacing:0.049px;left:2847.70px;-webkit-text-stroke:0.22px #303b88;">56 endpoints</div>
<div class="t r lb" style="top:532.08px;font-size:20px;line-height:28px;color:#555555;letter-spacing:0.56px;left:2847.70px;-webkit-text-stroke:0.22px #555555;">Allowed/sec</div>
<div class="t r" style="top:532.08px;font-size:20px;line-height:28px;color:#555555;letter-spacing:-1.426px;right:785.13px;-webkit-text-stroke:0.22px #555555;">0 B</div>
<svg class="a" style="left:3337.0px;top:537px" width="22" height="18" viewBox="0 0 22 18" fill="none" stroke="#555555" stroke-width="1.9" stroke-linecap="round" stroke-linejoin="round"><path d="M7 9H20.5M14.5 2.5L21 9L14.5 15.5M7 1.5H4.5Q1.5 1.5 1.5 4.5V13.5Q1.5 16.5 4.5 16.5H7"/></svg>
<div class="t r" style="top:532.08px;font-size:20px;line-height:28px;color:#555555;letter-spacing:-1.426px;right:880.13px;-webkit-text-stroke:0.22px #555555;">0 B</div>
<svg class="a" style="left:3242.0px;top:537px" width="22" height="18" viewBox="0 0 22 18" fill="none" stroke="#555555" stroke-width="1.9" stroke-linecap="round" stroke-linejoin="round"><path d="M1 9H14.5M8.5 2.5L15 9L8.5 15.5M15 1.5H17.5Q20.5 1.5 20.5 4.5V13.5Q20.5 16.5 17.5 16.5H15"/></svg>
<div class="t r lb" style="top:577.08px;font-size:20px;line-height:28px;color:#555555;letter-spacing:0.506px;left:2847.70px;-webkit-text-stroke:0.22px #555555;">Denied/sec</div>
<div class="t r" style="top:577.08px;font-size:20px;line-height:28px;color:#555555;letter-spacing:-1.426px;right:785.13px;-webkit-text-stroke:0.22px #555555;">0 B</div>
<svg class="a" style="left:3337.0px;top:582px" width="22" height="18" viewBox="0 0 22 18" fill="none" stroke="#555555" stroke-width="1.9" stroke-linecap="round" stroke-linejoin="round"><path d="M7 9H20.5M14.5 2.5L21 9L14.5 15.5M7 1.5H4.5Q1.5 1.5 1.5 4.5V13.5Q1.5 16.5 4.5 16.5H7"/></svg>
<div class="t r" style="top:577.08px;font-size:20px;line-height:28px;color:#555555;letter-spacing:-1.426px;right:880.13px;-webkit-text-stroke:0.22px #555555;">0 B</div>
<svg class="a" style="left:3242.0px;top:582px" width="22" height="18" viewBox="0 0 22 18" fill="none" stroke="#555555" stroke-width="1.9" stroke-linecap="round" stroke-linejoin="round"><path d="M1 9H14.5M8.5 2.5L15 9L8.5 15.5M15 1.5H17.5Q20.5 1.5 20.5 4.5V13.5Q20.5 16.5 17.5 16.5H15"/></svg>
<div class="sep" style="left:2824px;top:630px;width:600px"></div>
<div class="col" style="left:3476px"></div>
<div class="t b" style="top:341.61px;font-size:30px;line-height:42px;color:#121212;letter-spacing:0.933px;left:3503.50px;-webkit-text-stroke:0.5px #121212;">default</div>
<svg class="a" style="left:4039px;top:349px" width="10" height="30" viewBox="0 0 10 30" fill="#121212"><circle cx="5" cy="5.4" r="3.1"/><circle cx="5" cy="15.1" r="3.1"/><circle cx="5" cy="24.8" r="3.1"/></svg>
<div class="t r" style="top:345.70px;font-size:24px;line-height:34px;color:#2e377d;letter-spacing:-0.258px;left:3838.04px;-webkit-text-stroke:0.3px #2e377d;">Whats this?</div>
<svg class="a" style="left:3983px;top:351px" width="26" height="26" viewBox="0 0 26 26"><circle cx="13" cy="13" r="11.3" fill="none" stroke="#2e377d" stroke-width="1.6"/><text x="13" y="19" font-size="16" text-anchor="middle" fill="#2e377d" font-family="Liberation Sans, sans-serif">?</text></svg>
<div class="sep" style="left:3480px;top:408px;width:600px"></div>
<div class="a" style="left:3485px;top:411px;width:595px;height:134px;background:#fef4f3"></div>
<svg class="a" style="left:3480px;top:411px" width="28" height="136" viewBox="0 0 28 136"><polygon points="0,0 28,0 4,36 4,133.6 0,136" fill="#dd4f43"/></svg>
<div class="t r nm" style="top:432.70px;font-size:24px;line-height:34px;color:#121212;letter-spacing:0.738px;left:3507.54px;-webkit-text-stroke:0.3px #121212;">default-deny</div>
<svg class="a" style="left:4016px;top:435px;overflow:visible" width="40" height="40" viewBox="0 0 40 40"><polygon points="20,0 36,7.7 40,25.5 29,40 11,40 0,25.5 4,7.7" fill="#2e377d"/><circle cx="20" cy="21.2" r="11.6" fill="none" stroke="#fff" stroke-width="1.7"/><path d="M18.5 10.5 L20.5 14 L19 17 L20 19.5 L16 21 L17 23.5 L21 24.5 L24 24 L25.5 27 L23.5 29.5 L22 32.5 M17 23.5 L18 26 L19.5 29 L20 32.5 M9.5 17.5 L12.5 21.5 L16.5 24 L17.5 27.5 L18.5 31.5 M31.3 17 C28 15.5 26 18 27 20.5 C28 22.5 30 22.8 31.5 22.5" fill="none" stroke="#fff" stroke-width="1.6" stroke-linejoin="round" stroke-linecap="round"/></svg>
<div class="t r ns" style="top:441.08px;font-size:20px;line-height:28px;color:#121212;letter-spacing:0.692px;right:183.01px;-webkit-text-stroke:0.22px #121212;">global</div>
<div class="t r lb" style="top:492.08px;font-size:20px;line-height:28px;color:#555555;letter-spacing:0.506px;left:3507.70px;-webkit-text-stroke:0.22px #555555;">Denied/sec</div>
<div class="t r" style="top:492.08px;font-size:20px;line-height:28px;color:#dd4f43;letter-spacing:-0.99px;right:128.69px;-webkit-text-stroke:0.22px #dd4f43;">96 B</div>
<svg class="a" style="left:3980.4px;top:496.5px" width="22" height="18" viewBox="0 0 22 18" fill="none" stroke="#dd4f43" stroke-width="1.9" stroke-linecap="round" stroke-linejoin="round"><path d="M7 9H20.5M14.5 2.5L21 9L14.5 15.5M7 1.5H4.5Q1.5 1.5 1.5 4.5V13.5Q1.5 16.5 4.5 16.5H7"/></svg>
<div class="t r" style="top:492.08px;font-size:20px;line-height:28px;color:#dd4f43;letter-spacing:-1.114px;right:236.41px;-webkit-text-stroke:0.22px #dd4f43;">353.5 B</div>
<svg class="a" style="left:3844.7px;top:496.5px" width="22" height="18" viewBox="0 0 22 18" fill="none" stroke="#dd4f43" stroke-width="1.9" stroke-linecap="round" stroke-linejoin="round"><path d="M1 9H14.5M8.5 2.5L15 9L8.5 15.5M15 1.5H17.5Q20.5 1.5 20.5 4.5V13.5Q20.5 16.5 17.5 16.5H15"/></svg>
<div class="sep" style="left:3484px;top:545px;width:596px"></div>
<div class="t r nm" style="top:563.70px;font-size:24px;line-height:34px;color:#121212;letter-spacing:0.524px;left:3503.54px;-webkit-text-stroke:0.3px #121212;">konnectivity-agent</div>
<svg class="a" style="left:4016px;top:565.0px;overflow:visible" width="40" height="40" viewBox="0 0 40 40"><polygon points="20,0.4 35.8,7.8 39.8,24.8 28.9,38.6 11.1,38.6 0.2,24.8 4.2,7.8" fill="#2e377d" stroke="#fff" stroke-width="1.2"/><rect x="11.2" y="10.8" width="17.6" height="16" fill="none" stroke="#fff" stroke-width="1.3" stroke-dasharray="2.1 1.1"/><text x="20" y="33.6" font-size="6.2" fill="#fff" text-anchor="middle" font-family="Liberation Sans, sans-serif">ns</text></svg>
<div class="t r ns" style="top:570.08px;font-size:20px;line-height:28px;color:#121212;letter-spacing:0.679px;right:184.02px;-webkit-text-stroke:0.22px #121212;">kube-system</div>
<div class="t r ep" style="top:616.08px;font-size:20px;line-height:28px;color:#303b88;letter-spacing:-0.123px;left:3503.70px;-webkit-text-stroke:0.22px #303b88;">2 endpoints</div>
<div class="t r lb" style="top:662.08px;font-size:20px;line-height:28px;color:#555555;letter-spacing:0.56px;left:3503.70px;-webkit-text-stroke:0.22px #555555;">Allowed/sec</div>
<div class="t r" style="top:662.08px;font-size:20px;line-height:28px;color:#555555;letter-spacing:-0.729px;right:128.43px;-webkit-text-stroke:0.22px #555555;">5.<span class="n1">1</span> kB</div>
<svg class="a" style="left:3969.7px;top:666.5px" width="22" height="18" viewBox="0 0 22 18" fill="none" stroke="#555555" stroke-width="1.9" stroke-linecap="round" stroke-linejoin="round"><path d="M7 9H20.5M14.5 2.5L21 9L14.5 15.5M7 1.5H4.5Q1.5 1.5 1.5 4.5V13.5Q1.5 16.5 4.5 16.5H7"/></svg>
<div class="t r" style="top:662.08px;font-size:20px;line-height:28px;color:#555555;letter-spacing:-0.982px;right:246.98px;-webkit-text-stroke:0.22px #555555;">5.9 kB</div>
<svg class="a" style="left:3846.1px;top:666.5px" width="22" height="18" viewBox="0 0 22 18" fill="none" stroke="#555555" stroke-width="1.9" stroke-linecap="round" stroke-linejoin="round"><path d="M1 9H14.5M8.5 2.5L15 9L8.5 15.5M15 1.5H17.5Q20.5 1.5 20.5 4.5V13.5Q20.5 16.5 17.5 16.5H15"/></svg>
<div class="t r lb" style="top:707.08px;font-size:20px;line-height:28px;color:#555555;letter-spacing:0.506px;left:3503.70px;-webkit-text-stroke:0.22px #555555;">Denied/sec</div>
<div class="t r" style="top:707.08px;font-size:20px;line-height:28px;color:#555555;letter-spacing:-1.426px;right:129.13px;-webkit-text-stroke:0.22px #555555;">0 B</div>
<svg class="a" style="left:3993.0px;top:711.5px" width="22" height="18" viewBox="0 0 22 18" fill="none" stroke="#555555" stroke-width="1.9" stroke-linecap="round" stroke-linejoin="round"><path d="M7 9H20.5M14.5 2.5L21 9L14.5 15.5M7 1.5H4.5Q1.5 1.5 1.5 4.5V13.5Q1.5 16.5 4.5 16.5H7"/></svg>
<div class="t r" style="top:707.08px;font-size:20px;line-height:28px;color:#555555;letter-spacing:-1.426px;right:224.13px;-webkit-text-stroke:0.22px #555555;">0 B</div>
<svg class="a" style="left:3898.0px;top:711.5px" width="22" height="18" viewBox="0 0 22 18" fill="none" stroke="#555555" stroke-width="1.9" stroke-linecap="round" stroke-linejoin="round"><path d="M1 9H14.5M8.5 2.5L15 9L8.5 15.5M15 1.5H17.5Q20.5 1.5 20.5 4.5V13.5Q20.5 16.5 17.5 16.5H15"/></svg>
<div class="sep" style="left:3480px;top:761px;width:600px"></div>
</div></body></html>
